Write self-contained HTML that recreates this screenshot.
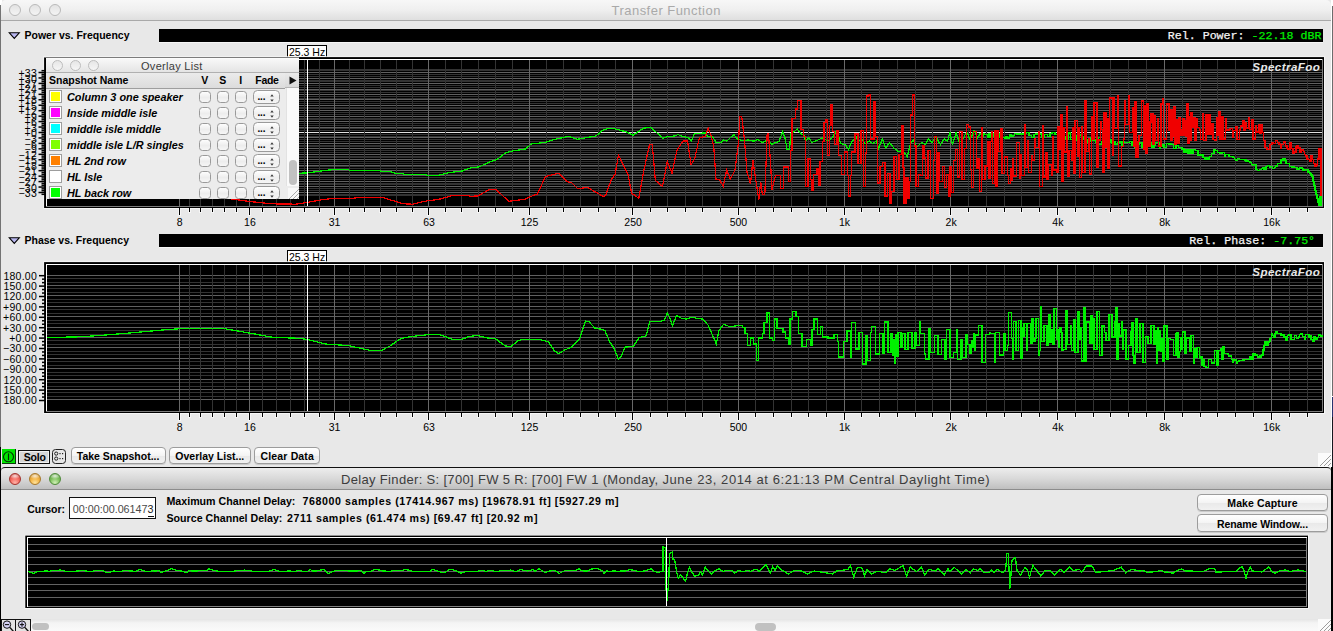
<!DOCTYPE html><html><head><meta charset="utf-8"><title>Transfer Function</title><style>
html,body{margin:0;padding:0}
body{width:1333px;height:631px;overflow:hidden;background:#e8e8e8;position:relative;font-family:"Liberation Sans",sans-serif;color:#000}
.a{position:absolute}
.b{font-weight:bold}
.t{position:absolute;white-space:nowrap;line-height:1}
svg{position:absolute;overflow:visible}
.btn{position:absolute;box-sizing:border-box;border:1px solid #9c9c9c;border-radius:4px;background:linear-gradient(#ffffff,#f4f4f4 50%,#e9e9e9 52%,#f1f1f1);box-shadow:0 1px 0 rgba(0,0,0,.12);font-weight:bold;font-size:10.5px;text-align:center;white-space:nowrap}
.cb{position:absolute;box-sizing:border-box;width:12px;height:12px;border:1px solid #9a9a9a;border-radius:3.5px;background:linear-gradient(#fdfdfd,#ededed 55%,#f6f6f6)}
.pp{position:absolute;box-sizing:border-box;width:27px;height:14px;border:1px solid #9a9a9a;border-radius:4.5px;background:linear-gradient(#ffffff,#efefef 55%,#f6f6f6)}
.sw{position:absolute;box-sizing:border-box;width:13px;height:13px;border:1px solid #9d9d9d;background:#fff;padding:1px}
.sw i{display:block;width:9px;height:9px;border:0;}
.rowt{position:absolute;white-space:nowrap;font-weight:bold;font-style:italic;font-size:10.85px;line-height:1;left:67px}
</style></head><body>
<div class="a" style="left:1331px;top:0;width:2px;height:631px;background:#fff"></div>
<div class="a" style="left:1331.5px;top:6px;width:2px;height:390px;background:#6c6c6c"></div>
<div class="a" style="left:1331.5px;top:397px;width:2px;height:20px;background:#26336e"></div>
<div class="a" style="left:1331.5px;top:417px;width:2px;height:50px;background:#15171f"></div>
<div class="a" style="left:1331px;top:467px;width:2px;height:164px;background:#000"></div>
<div class="a" style="left:0;top:0;width:2px;height:6px;background:#fff"></div>
<div class="a" style="left:0;top:5px;width:1px;height:442px;background:#737373"></div>
<div class="a" style="left:0;top:447px;width:1.3px;height:184px;background:#000"></div>
<div class="a" style="left:1px;top:0;width:1330px;height:20px;border-radius:5px 5px 0 0;background:linear-gradient(#f7f7f7,#efefef 50%,#dfdfdf);border-bottom:1px solid #a9a9a9"></div>
<div class="a" style="left:9px;top:4px;width:12px;height:12px;border-radius:50%;box-sizing:border-box;border:1px solid #b9b9b9;background:linear-gradient(#e3e3e3,#f4f4f4)"></div>
<div class="a" style="left:29px;top:4px;width:12px;height:12px;border-radius:50%;box-sizing:border-box;border:1px solid #b9b9b9;background:linear-gradient(#e3e3e3,#f4f4f4)"></div>
<div class="a" style="left:49px;top:4px;width:12px;height:12px;border-radius:50%;box-sizing:border-box;border:1px solid #b9b9b9;background:linear-gradient(#e3e3e3,#f4f4f4)"></div>
<div class="t" style="left:611.5px;top:3.5px;font-size:13px;letter-spacing:.47px;color:#a9a9a9">Transfer Function</div>
<svg style="left:8.3px;top:31.5px" width="13" height="8" viewBox="0 0 13 8"><path d="M1.3 0.8 L11.3 0.8 L6.3 6.4 Z" fill="#b9b7f0" stroke="#000" stroke-width="1.1" stroke-linejoin="miter"/></svg>
<div class="t b" style="left:24.5px;top:29.7px;font-size:10.5px">Power vs. Frequency</div>
<div class="a" style="left:159px;top:28.5px;width:1164px;height:13.5px;background:#000;border-bottom:1px solid #f6f6f6"></div>
<div class="t" style="right:11.6px;top:29.9px;font-family:'Liberation Mono',monospace;font-size:11.65px;color:#f4f4f4;-webkit-text-stroke:.25px #f4f4f4">Rel. Power: <span style="color:#00ee00;-webkit-text-stroke:.25px #00ee00">-22.18 dBR</span></div>
<svg style="left:8.3px;top:236.5px" width="13" height="8" viewBox="0 0 13 8"><path d="M1.3 0.8 L11.3 0.8 L6.3 6.4 Z" fill="#b9b7f0" stroke="#000" stroke-width="1.1" stroke-linejoin="miter"/></svg>
<div class="t b" style="left:24.5px;top:234.7px;font-size:10.5px">Phase vs. Frequency</div>
<div class="a" style="left:159px;top:233.5px;width:1164px;height:13.5px;background:#000;border-bottom:1px solid #f6f6f6"></div>
<div class="t" style="right:17.9px;top:234.9px;font-family:'Liberation Mono',monospace;font-size:11.65px;color:#f4f4f4;-webkit-text-stroke:.25px #f4f4f4">Rel. Phase: <span style="color:#00ee00;-webkit-text-stroke:.25px #00ee00">-7.75&deg;</span></div>
<div class="a" style="left:287px;top:45px;width:40px;height:12.5px;box-sizing:border-box;border:1px solid #000;background:#fff"></div>
<div class="t" style="left:289px;top:46.6px;font-size:10.5px">25.3 Hz</div>
<div class="a" style="left:287px;top:250px;width:40px;height:12.5px;box-sizing:border-box;border:1px solid #000;background:#fff"></div>
<div class="t" style="left:289px;top:251.6px;font-size:10.5px">25.3 Hz</div>
<svg style="left:0;top:0" width="1333" height="631" viewBox="0 0 1333 631" font-family="Liberation Sans, sans-serif"><g shape-rendering="crispEdges"><rect x="43.3" y="56.3" width="1281.8" height="152.8" fill="#f6f6f6" shape-rendering="auto"/><rect x="44.1" y="57.1" width="1279.9" height="150.9" fill="#000" shape-rendering="auto"/><rect x="47" y="69" width="1275" height="1" fill="#333333"/><rect x="47" y="70" width="1275" height="1" fill="#333333"/><rect x="47" y="72" width="1275" height="1" fill="#606060"/><rect x="47" y="74" width="1275" height="1" fill="#333333"/><rect x="47" y="76" width="1275" height="1" fill="#333333"/><rect x="47" y="78" width="1275" height="1" fill="#606060"/><rect x="47" y="80" width="1275" height="1" fill="#333333"/><rect x="47" y="81" width="1275" height="1" fill="#333333"/><rect x="47" y="83" width="1275" height="1" fill="#606060"/><rect x="47" y="85" width="1275" height="1" fill="#333333"/><rect x="47" y="87" width="1275" height="1" fill="#333333"/><rect x="47" y="89" width="1275" height="1" fill="#606060"/><rect x="47" y="90" width="1275" height="1" fill="#333333"/><rect x="47" y="92" width="1275" height="1" fill="#333333"/><rect x="47" y="94" width="1275" height="1" fill="#606060"/><rect x="47" y="96" width="1275" height="1" fill="#333333"/><rect x="47" y="98" width="1275" height="1" fill="#333333"/><rect x="47" y="99" width="1275" height="1" fill="#606060"/><rect x="47" y="101" width="1275" height="1" fill="#333333"/><rect x="47" y="103" width="1275" height="1" fill="#333333"/><rect x="47" y="105" width="1275" height="1" fill="#606060"/><rect x="47" y="107" width="1275" height="1" fill="#333333"/><rect x="47" y="108" width="1275" height="1" fill="#333333"/><rect x="47" y="110" width="1275" height="1" fill="#606060"/><rect x="47" y="112" width="1275" height="1" fill="#333333"/><rect x="47" y="114" width="1275" height="1" fill="#333333"/><rect x="47" y="116" width="1275" height="1" fill="#606060"/><rect x="47" y="118" width="1275" height="1" fill="#333333"/><rect x="47" y="119" width="1275" height="1" fill="#333333"/><rect x="47" y="121" width="1275" height="1" fill="#606060"/><rect x="47" y="123" width="1275" height="1" fill="#333333"/><rect x="47" y="125" width="1275" height="1" fill="#333333"/><rect x="47" y="127" width="1275" height="1" fill="#606060"/><rect x="47" y="128" width="1275" height="1" fill="#333333"/><rect x="47" y="130" width="1275" height="1" fill="#333333"/><rect x="47" y="132" width="1275" height="1" fill="#e0e0e0"/><rect x="47" y="134" width="1275" height="1" fill="#333333"/><rect x="47" y="136" width="1275" height="1" fill="#333333"/><rect x="47" y="137" width="1275" height="1" fill="#606060"/><rect x="47" y="139" width="1275" height="1" fill="#333333"/><rect x="47" y="141" width="1275" height="1" fill="#333333"/><rect x="47" y="143" width="1275" height="1" fill="#606060"/><rect x="47" y="145" width="1275" height="1" fill="#333333"/><rect x="47" y="146" width="1275" height="1" fill="#333333"/><rect x="47" y="148" width="1275" height="1" fill="#606060"/><rect x="47" y="150" width="1275" height="1" fill="#333333"/><rect x="47" y="152" width="1275" height="1" fill="#333333"/><rect x="47" y="154" width="1275" height="1" fill="#606060"/><rect x="47" y="156" width="1275" height="1" fill="#333333"/><rect x="47" y="157" width="1275" height="1" fill="#333333"/><rect x="47" y="159" width="1275" height="1" fill="#606060"/><rect x="47" y="161" width="1275" height="1" fill="#333333"/><rect x="47" y="163" width="1275" height="1" fill="#333333"/><rect x="47" y="165" width="1275" height="1" fill="#606060"/><rect x="47" y="166" width="1275" height="1" fill="#333333"/><rect x="47" y="168" width="1275" height="1" fill="#333333"/><rect x="47" y="170" width="1275" height="1" fill="#606060"/><rect x="47" y="172" width="1275" height="1" fill="#333333"/><rect x="47" y="174" width="1275" height="1" fill="#333333"/><rect x="47" y="175" width="1275" height="1" fill="#606060"/><rect x="47" y="177" width="1275" height="1" fill="#333333"/><rect x="47" y="179" width="1275" height="1" fill="#333333"/><rect x="47" y="181" width="1275" height="1" fill="#606060"/><rect x="47" y="183" width="1275" height="1" fill="#333333"/><rect x="47" y="184" width="1275" height="1" fill="#333333"/><rect x="47" y="186" width="1275" height="1" fill="#606060"/><rect x="47" y="188" width="1275" height="1" fill="#333333"/><rect x="47" y="190" width="1275" height="1" fill="#333333"/><rect x="47" y="192" width="1275" height="1" fill="#606060"/><rect x="47" y="194" width="1275" height="1" fill="#333333"/><rect x="47" y="195" width="1275" height="1" fill="#333333"/><rect x="179" y="60" width="1" height="146" fill="#686868"/><rect x="189" y="60" width="1" height="146" fill="#333333"/><rect x="200" y="60" width="1" height="146" fill="#333333"/><rect x="212" y="60" width="1" height="146" fill="#333333"/><rect x="224" y="60" width="1" height="146" fill="#333333"/><rect x="236" y="60" width="1" height="146" fill="#333333"/><rect x="249" y="60" width="1" height="146" fill="#686868"/><rect x="262" y="60" width="1" height="146" fill="#333333"/><rect x="276" y="60" width="1" height="146" fill="#333333"/><rect x="290" y="60" width="1" height="146" fill="#333333"/><rect x="304" y="60" width="1" height="146" fill="#333333"/><rect x="319" y="60" width="1" height="146" fill="#333333"/><rect x="334" y="60" width="1" height="146" fill="#686868"/><rect x="349" y="60" width="1" height="146" fill="#333333"/><rect x="364" y="60" width="1" height="146" fill="#333333"/><rect x="380" y="60" width="1" height="146" fill="#333333"/><rect x="396" y="60" width="1" height="146" fill="#333333"/><rect x="412" y="60" width="1" height="146" fill="#333333"/><rect x="428" y="60" width="1" height="146" fill="#686868"/><rect x="445" y="60" width="1" height="146" fill="#333333"/><rect x="461" y="60" width="1" height="146" fill="#333333"/><rect x="478" y="60" width="1" height="146" fill="#333333"/><rect x="495" y="60" width="1" height="146" fill="#333333"/><rect x="512" y="60" width="1" height="146" fill="#333333"/><rect x="529" y="60" width="1" height="146" fill="#686868"/><rect x="546" y="60" width="1" height="146" fill="#333333"/><rect x="563" y="60" width="1" height="146" fill="#333333"/><rect x="580" y="60" width="1" height="146" fill="#333333"/><rect x="598" y="60" width="1" height="146" fill="#333333"/><rect x="615" y="60" width="1" height="146" fill="#333333"/><rect x="632" y="60" width="1" height="146" fill="#686868"/><rect x="650" y="60" width="1" height="146" fill="#333333"/><rect x="667" y="60" width="1" height="146" fill="#333333"/><rect x="685" y="60" width="1" height="146" fill="#333333"/><rect x="702" y="60" width="1" height="146" fill="#333333"/><rect x="720" y="60" width="1" height="146" fill="#333333"/><rect x="738" y="60" width="1" height="146" fill="#686868"/><rect x="755" y="60" width="1" height="146" fill="#333333"/><rect x="773" y="60" width="1" height="146" fill="#333333"/><rect x="791" y="60" width="1" height="146" fill="#333333"/><rect x="808" y="60" width="1" height="146" fill="#333333"/><rect x="826" y="60" width="1" height="146" fill="#333333"/><rect x="844" y="60" width="1" height="146" fill="#686868"/><rect x="861" y="60" width="1" height="146" fill="#333333"/><rect x="879" y="60" width="1" height="146" fill="#333333"/><rect x="897" y="60" width="1" height="146" fill="#333333"/><rect x="915" y="60" width="1" height="146" fill="#333333"/><rect x="932" y="60" width="1" height="146" fill="#333333"/><rect x="950" y="60" width="1" height="146" fill="#686868"/><rect x="968" y="60" width="1" height="146" fill="#333333"/><rect x="986" y="60" width="1" height="146" fill="#333333"/><rect x="1004" y="60" width="1" height="146" fill="#333333"/><rect x="1021" y="60" width="1" height="146" fill="#333333"/><rect x="1039" y="60" width="1" height="146" fill="#333333"/><rect x="1057" y="60" width="1" height="146" fill="#686868"/><rect x="1075" y="60" width="1" height="146" fill="#333333"/><rect x="1093" y="60" width="1" height="146" fill="#333333"/><rect x="1110" y="60" width="1" height="146" fill="#333333"/><rect x="1128" y="60" width="1" height="146" fill="#333333"/><rect x="1146" y="60" width="1" height="146" fill="#333333"/><rect x="1164" y="60" width="1" height="146" fill="#686868"/><rect x="1182" y="60" width="1" height="146" fill="#333333"/><rect x="1200" y="60" width="1" height="146" fill="#333333"/><rect x="1217" y="60" width="1" height="146" fill="#333333"/><rect x="1235" y="60" width="1" height="146" fill="#333333"/><rect x="1253" y="60" width="1" height="146" fill="#333333"/><rect x="1271" y="60" width="1" height="146" fill="#686868"/><rect x="1289" y="60" width="1" height="146" fill="#333333"/><rect x="1307" y="60" width="1" height="146" fill="#333333"/><rect x="46" y="59" width="1277" height="1" fill="#ffffff"/><rect x="46" y="59" width="1" height="148" fill="#ffffff"/><rect x="46" y="206" width="1277" height="1" fill="#7c7c7c"/><rect x="1322" y="59" width="1" height="148" fill="#7c7c7c"/><rect x="178" y="209" width="3" height="7" fill="#f5f5f5"/><rect x="179" y="208" width="1" height="7" fill="#000"/><rect x="188" y="209" width="3" height="4" fill="#f5f5f5"/><rect x="189" y="208" width="1" height="4" fill="#000"/><rect x="199" y="209" width="3" height="4" fill="#f5f5f5"/><rect x="200" y="208" width="1" height="4" fill="#000"/><rect x="211" y="209" width="3" height="4" fill="#f5f5f5"/><rect x="212" y="208" width="1" height="4" fill="#000"/><rect x="223" y="209" width="3" height="4" fill="#f5f5f5"/><rect x="224" y="208" width="1" height="4" fill="#000"/><rect x="235" y="209" width="3" height="4" fill="#f5f5f5"/><rect x="236" y="208" width="1" height="4" fill="#000"/><rect x="248" y="209" width="3" height="7" fill="#f5f5f5"/><rect x="249" y="208" width="1" height="7" fill="#000"/><rect x="261" y="209" width="3" height="4" fill="#f5f5f5"/><rect x="262" y="208" width="1" height="4" fill="#000"/><rect x="275" y="209" width="3" height="4" fill="#f5f5f5"/><rect x="276" y="208" width="1" height="4" fill="#000"/><rect x="289" y="209" width="3" height="4" fill="#f5f5f5"/><rect x="290" y="208" width="1" height="4" fill="#000"/><rect x="303" y="209" width="3" height="4" fill="#f5f5f5"/><rect x="304" y="208" width="1" height="4" fill="#000"/><rect x="318" y="209" width="3" height="4" fill="#f5f5f5"/><rect x="319" y="208" width="1" height="4" fill="#000"/><rect x="333" y="209" width="3" height="7" fill="#f5f5f5"/><rect x="334" y="208" width="1" height="7" fill="#000"/><rect x="348" y="209" width="3" height="4" fill="#f5f5f5"/><rect x="349" y="208" width="1" height="4" fill="#000"/><rect x="363" y="209" width="3" height="4" fill="#f5f5f5"/><rect x="364" y="208" width="1" height="4" fill="#000"/><rect x="379" y="209" width="3" height="4" fill="#f5f5f5"/><rect x="380" y="208" width="1" height="4" fill="#000"/><rect x="395" y="209" width="3" height="4" fill="#f5f5f5"/><rect x="396" y="208" width="1" height="4" fill="#000"/><rect x="411" y="209" width="3" height="4" fill="#f5f5f5"/><rect x="412" y="208" width="1" height="4" fill="#000"/><rect x="427" y="209" width="3" height="7" fill="#f5f5f5"/><rect x="428" y="208" width="1" height="7" fill="#000"/><rect x="444" y="209" width="3" height="4" fill="#f5f5f5"/><rect x="445" y="208" width="1" height="4" fill="#000"/><rect x="460" y="209" width="3" height="4" fill="#f5f5f5"/><rect x="461" y="208" width="1" height="4" fill="#000"/><rect x="477" y="209" width="3" height="4" fill="#f5f5f5"/><rect x="478" y="208" width="1" height="4" fill="#000"/><rect x="494" y="209" width="3" height="4" fill="#f5f5f5"/><rect x="495" y="208" width="1" height="4" fill="#000"/><rect x="511" y="209" width="3" height="4" fill="#f5f5f5"/><rect x="512" y="208" width="1" height="4" fill="#000"/><rect x="528" y="209" width="3" height="7" fill="#f5f5f5"/><rect x="529" y="208" width="1" height="7" fill="#000"/><rect x="545" y="209" width="3" height="4" fill="#f5f5f5"/><rect x="546" y="208" width="1" height="4" fill="#000"/><rect x="562" y="209" width="3" height="4" fill="#f5f5f5"/><rect x="563" y="208" width="1" height="4" fill="#000"/><rect x="579" y="209" width="3" height="4" fill="#f5f5f5"/><rect x="580" y="208" width="1" height="4" fill="#000"/><rect x="597" y="209" width="3" height="4" fill="#f5f5f5"/><rect x="598" y="208" width="1" height="4" fill="#000"/><rect x="614" y="209" width="3" height="4" fill="#f5f5f5"/><rect x="615" y="208" width="1" height="4" fill="#000"/><rect x="631" y="209" width="3" height="7" fill="#f5f5f5"/><rect x="632" y="208" width="1" height="7" fill="#000"/><rect x="649" y="209" width="3" height="4" fill="#f5f5f5"/><rect x="650" y="208" width="1" height="4" fill="#000"/><rect x="666" y="209" width="3" height="4" fill="#f5f5f5"/><rect x="667" y="208" width="1" height="4" fill="#000"/><rect x="684" y="209" width="3" height="4" fill="#f5f5f5"/><rect x="685" y="208" width="1" height="4" fill="#000"/><rect x="701" y="209" width="3" height="4" fill="#f5f5f5"/><rect x="702" y="208" width="1" height="4" fill="#000"/><rect x="719" y="209" width="3" height="4" fill="#f5f5f5"/><rect x="720" y="208" width="1" height="4" fill="#000"/><rect x="737" y="209" width="3" height="7" fill="#f5f5f5"/><rect x="738" y="208" width="1" height="7" fill="#000"/><rect x="754" y="209" width="3" height="4" fill="#f5f5f5"/><rect x="755" y="208" width="1" height="4" fill="#000"/><rect x="772" y="209" width="3" height="4" fill="#f5f5f5"/><rect x="773" y="208" width="1" height="4" fill="#000"/><rect x="790" y="209" width="3" height="4" fill="#f5f5f5"/><rect x="791" y="208" width="1" height="4" fill="#000"/><rect x="807" y="209" width="3" height="4" fill="#f5f5f5"/><rect x="808" y="208" width="1" height="4" fill="#000"/><rect x="825" y="209" width="3" height="4" fill="#f5f5f5"/><rect x="826" y="208" width="1" height="4" fill="#000"/><rect x="843" y="209" width="3" height="7" fill="#f5f5f5"/><rect x="844" y="208" width="1" height="7" fill="#000"/><rect x="860" y="209" width="3" height="4" fill="#f5f5f5"/><rect x="861" y="208" width="1" height="4" fill="#000"/><rect x="878" y="209" width="3" height="4" fill="#f5f5f5"/><rect x="879" y="208" width="1" height="4" fill="#000"/><rect x="896" y="209" width="3" height="4" fill="#f5f5f5"/><rect x="897" y="208" width="1" height="4" fill="#000"/><rect x="914" y="209" width="3" height="4" fill="#f5f5f5"/><rect x="915" y="208" width="1" height="4" fill="#000"/><rect x="931" y="209" width="3" height="4" fill="#f5f5f5"/><rect x="932" y="208" width="1" height="4" fill="#000"/><rect x="949" y="209" width="3" height="7" fill="#f5f5f5"/><rect x="950" y="208" width="1" height="7" fill="#000"/><rect x="967" y="209" width="3" height="4" fill="#f5f5f5"/><rect x="968" y="208" width="1" height="4" fill="#000"/><rect x="985" y="209" width="3" height="4" fill="#f5f5f5"/><rect x="986" y="208" width="1" height="4" fill="#000"/><rect x="1003" y="209" width="3" height="4" fill="#f5f5f5"/><rect x="1004" y="208" width="1" height="4" fill="#000"/><rect x="1020" y="209" width="3" height="4" fill="#f5f5f5"/><rect x="1021" y="208" width="1" height="4" fill="#000"/><rect x="1038" y="209" width="3" height="4" fill="#f5f5f5"/><rect x="1039" y="208" width="1" height="4" fill="#000"/><rect x="1056" y="209" width="3" height="7" fill="#f5f5f5"/><rect x="1057" y="208" width="1" height="7" fill="#000"/><rect x="1074" y="209" width="3" height="4" fill="#f5f5f5"/><rect x="1075" y="208" width="1" height="4" fill="#000"/><rect x="1092" y="209" width="3" height="4" fill="#f5f5f5"/><rect x="1093" y="208" width="1" height="4" fill="#000"/><rect x="1109" y="209" width="3" height="4" fill="#f5f5f5"/><rect x="1110" y="208" width="1" height="4" fill="#000"/><rect x="1127" y="209" width="3" height="4" fill="#f5f5f5"/><rect x="1128" y="208" width="1" height="4" fill="#000"/><rect x="1145" y="209" width="3" height="4" fill="#f5f5f5"/><rect x="1146" y="208" width="1" height="4" fill="#000"/><rect x="1163" y="209" width="3" height="7" fill="#f5f5f5"/><rect x="1164" y="208" width="1" height="7" fill="#000"/><rect x="1181" y="209" width="3" height="4" fill="#f5f5f5"/><rect x="1182" y="208" width="1" height="4" fill="#000"/><rect x="1199" y="209" width="3" height="4" fill="#f5f5f5"/><rect x="1200" y="208" width="1" height="4" fill="#000"/><rect x="1216" y="209" width="3" height="4" fill="#f5f5f5"/><rect x="1217" y="208" width="1" height="4" fill="#000"/><rect x="1234" y="209" width="3" height="4" fill="#f5f5f5"/><rect x="1235" y="208" width="1" height="4" fill="#000"/><rect x="1252" y="209" width="3" height="4" fill="#f5f5f5"/><rect x="1253" y="208" width="1" height="4" fill="#000"/><rect x="1270" y="209" width="3" height="7" fill="#f5f5f5"/><rect x="1271" y="208" width="1" height="7" fill="#000"/><rect x="1288" y="209" width="3" height="4" fill="#f5f5f5"/><rect x="1289" y="208" width="1" height="4" fill="#000"/><rect x="1306" y="209" width="3" height="4" fill="#f5f5f5"/><rect x="1307" y="208" width="1" height="4" fill="#000"/><text x="179.7" y="225.5" text-anchor="middle" font-size="10.5" fill="#000">8</text><text x="249.9" y="225.5" text-anchor="middle" font-size="10.5" fill="#000">16</text><text x="334.6" y="225.5" text-anchor="middle" font-size="10.5" fill="#000">31</text><text x="429.1" y="225.5" text-anchor="middle" font-size="10.5" fill="#000">63</text><text x="529.5" y="225.5" text-anchor="middle" font-size="10.5" fill="#000">125</text><text x="633.1" y="225.5" text-anchor="middle" font-size="10.5" fill="#000">250</text><text x="738.4" y="225.5" text-anchor="middle" font-size="10.5" fill="#000">500</text><text x="844.5" y="225.5" text-anchor="middle" font-size="10.5" fill="#000">1k</text><text x="951.1" y="225.5" text-anchor="middle" font-size="10.5" fill="#000">2k</text><text x="1057.9" y="225.5" text-anchor="middle" font-size="10.5" fill="#000">4k</text><text x="1164.8" y="225.5" text-anchor="middle" font-size="10.5" fill="#000">8k</text><text x="1271.7" y="225.5" text-anchor="middle" font-size="10.5" fill="#000">16k</text><rect x="41.5" y="193.57" width="3.5" height="1.5" fill="#000" shape-rendering="auto"/><rect x="38.5" y="191.75" width="6.5" height="1.5" fill="#000" shape-rendering="auto"/><rect x="41.5" y="189.93" width="3.5" height="1.5" fill="#000" shape-rendering="auto"/><rect x="41.5" y="188.11" width="3.5" height="1.5" fill="#000" shape-rendering="auto"/><rect x="38.5" y="186.30" width="6.5" height="1.5" fill="#000" shape-rendering="auto"/><rect x="41.5" y="184.48" width="3.5" height="1.5" fill="#000" shape-rendering="auto"/><rect x="41.5" y="182.66" width="3.5" height="1.5" fill="#000" shape-rendering="auto"/><rect x="38.5" y="180.84" width="6.5" height="1.5" fill="#000" shape-rendering="auto"/><rect x="41.5" y="179.02" width="3.5" height="1.5" fill="#000" shape-rendering="auto"/><rect x="41.5" y="177.20" width="3.5" height="1.5" fill="#000" shape-rendering="auto"/><rect x="38.5" y="175.39" width="6.5" height="1.5" fill="#000" shape-rendering="auto"/><rect x="41.5" y="173.57" width="3.5" height="1.5" fill="#000" shape-rendering="auto"/><rect x="41.5" y="171.75" width="3.5" height="1.5" fill="#000" shape-rendering="auto"/><rect x="38.5" y="169.93" width="6.5" height="1.5" fill="#000" shape-rendering="auto"/><rect x="41.5" y="168.11" width="3.5" height="1.5" fill="#000" shape-rendering="auto"/><rect x="41.5" y="166.30" width="3.5" height="1.5" fill="#000" shape-rendering="auto"/><rect x="38.5" y="164.48" width="6.5" height="1.5" fill="#000" shape-rendering="auto"/><rect x="41.5" y="162.66" width="3.5" height="1.5" fill="#000" shape-rendering="auto"/><rect x="41.5" y="160.84" width="3.5" height="1.5" fill="#000" shape-rendering="auto"/><rect x="38.5" y="159.02" width="6.5" height="1.5" fill="#000" shape-rendering="auto"/><rect x="41.5" y="157.20" width="3.5" height="1.5" fill="#000" shape-rendering="auto"/><rect x="41.5" y="155.39" width="3.5" height="1.5" fill="#000" shape-rendering="auto"/><rect x="38.5" y="153.57" width="6.5" height="1.5" fill="#000" shape-rendering="auto"/><rect x="41.5" y="151.75" width="3.5" height="1.5" fill="#000" shape-rendering="auto"/><rect x="41.5" y="149.93" width="3.5" height="1.5" fill="#000" shape-rendering="auto"/><rect x="38.5" y="148.11" width="6.5" height="1.5" fill="#000" shape-rendering="auto"/><rect x="41.5" y="146.30" width="3.5" height="1.5" fill="#000" shape-rendering="auto"/><rect x="41.5" y="144.48" width="3.5" height="1.5" fill="#000" shape-rendering="auto"/><rect x="38.5" y="142.66" width="6.5" height="1.5" fill="#000" shape-rendering="auto"/><rect x="41.5" y="140.84" width="3.5" height="1.5" fill="#000" shape-rendering="auto"/><rect x="41.5" y="139.02" width="3.5" height="1.5" fill="#000" shape-rendering="auto"/><rect x="38.5" y="137.20" width="6.5" height="1.5" fill="#000" shape-rendering="auto"/><rect x="41.5" y="135.39" width="3.5" height="1.5" fill="#000" shape-rendering="auto"/><rect x="41.5" y="133.57" width="3.5" height="1.5" fill="#000" shape-rendering="auto"/><rect x="38.5" y="131.75" width="6.5" height="1.5" fill="#000" shape-rendering="auto"/><rect x="41.5" y="129.93" width="3.5" height="1.5" fill="#000" shape-rendering="auto"/><rect x="41.5" y="128.11" width="3.5" height="1.5" fill="#000" shape-rendering="auto"/><rect x="38.5" y="126.30" width="6.5" height="1.5" fill="#000" shape-rendering="auto"/><rect x="41.5" y="124.48" width="3.5" height="1.5" fill="#000" shape-rendering="auto"/><rect x="41.5" y="122.66" width="3.5" height="1.5" fill="#000" shape-rendering="auto"/><rect x="38.5" y="120.84" width="6.5" height="1.5" fill="#000" shape-rendering="auto"/><rect x="41.5" y="119.02" width="3.5" height="1.5" fill="#000" shape-rendering="auto"/><rect x="41.5" y="117.20" width="3.5" height="1.5" fill="#000" shape-rendering="auto"/><rect x="38.5" y="115.39" width="6.5" height="1.5" fill="#000" shape-rendering="auto"/><rect x="41.5" y="113.57" width="3.5" height="1.5" fill="#000" shape-rendering="auto"/><rect x="41.5" y="111.75" width="3.5" height="1.5" fill="#000" shape-rendering="auto"/><rect x="38.5" y="109.93" width="6.5" height="1.5" fill="#000" shape-rendering="auto"/><rect x="41.5" y="108.11" width="3.5" height="1.5" fill="#000" shape-rendering="auto"/><rect x="41.5" y="106.30" width="3.5" height="1.5" fill="#000" shape-rendering="auto"/><rect x="38.5" y="104.48" width="6.5" height="1.5" fill="#000" shape-rendering="auto"/><rect x="41.5" y="102.66" width="3.5" height="1.5" fill="#000" shape-rendering="auto"/><rect x="41.5" y="100.84" width="3.5" height="1.5" fill="#000" shape-rendering="auto"/><rect x="38.5" y="99.02" width="6.5" height="1.5" fill="#000" shape-rendering="auto"/><rect x="41.5" y="97.20" width="3.5" height="1.5" fill="#000" shape-rendering="auto"/><rect x="41.5" y="95.39" width="3.5" height="1.5" fill="#000" shape-rendering="auto"/><rect x="38.5" y="93.57" width="6.5" height="1.5" fill="#000" shape-rendering="auto"/><rect x="41.5" y="91.75" width="3.5" height="1.5" fill="#000" shape-rendering="auto"/><rect x="41.5" y="89.93" width="3.5" height="1.5" fill="#000" shape-rendering="auto"/><rect x="38.5" y="88.11" width="6.5" height="1.5" fill="#000" shape-rendering="auto"/><rect x="41.5" y="86.30" width="3.5" height="1.5" fill="#000" shape-rendering="auto"/><rect x="41.5" y="84.48" width="3.5" height="1.5" fill="#000" shape-rendering="auto"/><rect x="38.5" y="82.66" width="6.5" height="1.5" fill="#000" shape-rendering="auto"/><rect x="41.5" y="80.84" width="3.5" height="1.5" fill="#000" shape-rendering="auto"/><rect x="41.5" y="79.02" width="3.5" height="1.5" fill="#000" shape-rendering="auto"/><rect x="38.5" y="77.20" width="6.5" height="1.5" fill="#000" shape-rendering="auto"/><rect x="41.5" y="75.39" width="3.5" height="1.5" fill="#000" shape-rendering="auto"/><rect x="41.5" y="73.57" width="3.5" height="1.5" fill="#000" shape-rendering="auto"/><rect x="38.5" y="71.75" width="6.5" height="1.5" fill="#000" shape-rendering="auto"/><rect x="41.5" y="69.93" width="3.5" height="1.5" fill="#000" shape-rendering="auto"/></g><text x="37" y="77.0" text-anchor="end" font-size="10.5" letter-spacing=".25" fill="#000">+33</text><text x="37" y="82.5" text-anchor="end" font-size="10.5" letter-spacing=".25" fill="#000">+30</text><text x="37" y="87.9" text-anchor="end" font-size="10.5" letter-spacing=".25" fill="#000">+27</text><text x="37" y="93.4" text-anchor="end" font-size="10.5" letter-spacing=".25" fill="#000">+24</text><text x="37" y="98.8" text-anchor="end" font-size="10.5" letter-spacing=".25" fill="#000">+21</text><text x="37" y="104.3" text-anchor="end" font-size="10.5" letter-spacing=".25" fill="#000">+18</text><text x="37" y="109.7" text-anchor="end" font-size="10.5" letter-spacing=".25" fill="#000">+15</text><text x="37" y="115.2" text-anchor="end" font-size="10.5" letter-spacing=".25" fill="#000">+12</text><text x="37" y="120.6" text-anchor="end" font-size="10.5" letter-spacing=".25" fill="#000">+9</text><text x="37" y="126.1" text-anchor="end" font-size="10.5" letter-spacing=".25" fill="#000">+6</text><text x="37" y="131.5" text-anchor="end" font-size="10.5" letter-spacing=".25" fill="#000">+3</text><text x="37" y="137.0" text-anchor="end" font-size="10.5" letter-spacing=".25" fill="#000">+0</text><text x="37" y="142.5" text-anchor="end" font-size="10.5" letter-spacing=".25" fill="#000">−3</text><text x="37" y="147.9" text-anchor="end" font-size="10.5" letter-spacing=".25" fill="#000">−6</text><text x="37" y="153.4" text-anchor="end" font-size="10.5" letter-spacing=".25" fill="#000">−9</text><text x="37" y="158.8" text-anchor="end" font-size="10.5" letter-spacing=".25" fill="#000">−12</text><text x="37" y="164.3" text-anchor="end" font-size="10.5" letter-spacing=".25" fill="#000">−15</text><text x="37" y="169.7" text-anchor="end" font-size="10.5" letter-spacing=".25" fill="#000">−18</text><text x="37" y="175.2" text-anchor="end" font-size="10.5" letter-spacing=".25" fill="#000">−21</text><text x="37" y="180.6" text-anchor="end" font-size="10.5" letter-spacing=".25" fill="#000">−24</text><text x="37" y="186.1" text-anchor="end" font-size="10.5" letter-spacing=".25" fill="#000">−27</text><text x="37" y="191.5" text-anchor="end" font-size="10.5" letter-spacing=".25" fill="#000">−30</text><text x="37" y="197.0" text-anchor="end" font-size="10.5" letter-spacing=".25" fill="#000">−33</text><g fill="none" stroke-width="1.25" stroke-linejoin="miter" shape-rendering="crispEdges"><polyline points="47.0,176.5 120.0,176.5 180.0,175.0 232.0,173.8 262.0,176.0 285.0,175.0 299.6,173.3 307.9,172.8 322.1,170.9 336.4,169.2 347.1,169.2 349.5,170.2 379.2,170.4 381.6,171.4 390.0,171.6 395.8,173.3 403.0,173.8 405.3,174.5 425.5,174.5 427.9,175.4 438.6,175.2 448.1,172.8 462.4,170.9 471.9,167.6 479.0,166.9 490.9,161.4 496.9,159.7 505.2,153.1 509.9,151.4 525.4,149.0 531.3,144.0 545.6,142.4 555.1,139.3 568.2,136.4 577.7,139.3 590.0,137.0 596.0,136.0 601.9,130.5 609.0,128.4 613.8,128.6 625.7,131.7 632.8,135.3 643.5,128.2 650.6,127.4 657.8,133.6 662.5,138.4 668.5,136.5 674.4,136.0 678.0,134.6 682.7,136.5 688.7,137.7 691.1,141.2 694.6,133.6 705.3,132.9 707.7,136.5 712.5,136.5 716.0,142.4 720.8,142.4 723.2,140.0 726.7,141.2 730.3,137.7 733.9,134.6 737.4,138.9 742.2,140.8 748.1,140.0 754.1,141.2 757.7,139.6 762.4,142.4 767.2,140.0 771.9,144.1 779.1,141.2 782.6,131.7 785.0,137.7 787.1,149.6 789.5,149.6 790.7,134.1 794.3,131.7 797.1,128.9 800.2,132.9 803.8,135.3 805.7,141.2 808.5,137.7 812.1,142.4 818.0,140.0 822.8,137.7 827.6,141.2 832.3,137.7 835.9,131.7 838.3,135.3 840.6,143.6 845.4,144.8 848.5,149.6 851.3,142.4 856.1,136.5 858.5,141.2 862.0,138.9 865.1,143.6 869.2,140.8 872.7,143.6 876.3,141.2 878.7,148.4 882.3,138.9 885.8,148.4 889.4,142.4 894.1,148.4 898.9,151.9 902.5,149.6 907.2,156.7 910.8,142.4 913.2,140.0 916.7,147.2 921.5,142.4 925.1,144.8 928.6,138.9 932.2,142.4 935.8,136.5 940.5,144.8 944.1,138.9 947.7,141.2 950.0,131.7 952.4,144.8 956.0,132.9 959.5,142.4 963.1,138.9 966.7,131.7 970.2,140.0 973.8,130.5 977.4,137.7 979.8,134.1 979.8,134.1 981.5,134.1 981.5,136.8 983.5,136.8 983.5,134.0 984.5,134.0 984.5,134.8 985.5,134.8 985.5,134.6 988.0,134.6 988.0,137.0 989.0,137.0 989.0,134.1 990.0,134.1 990.0,137.5 992.0,137.5 992.0,136.2 993.5,136.2 993.5,133.9 995.5,133.9 995.5,135.0 997.5,135.0 997.5,133.5 999.5,133.5 999.5,137.1 1002.0,137.1 1002.0,137.7 1004.5,137.7 1004.5,137.9 1006.0,137.9 1006.0,136.7 1007.0,136.7 1007.0,138.0 1009.5,138.0 1009.5,135.0 1011.0,135.0 1011.0,136.2 1013.0,136.2 1013.0,135.2 1014.5,135.2 1014.5,133.3 1017.0,133.3 1017.0,134.3 1019.0,134.3 1019.0,133.7 1021.0,133.7 1021.0,134.7 1022.5,134.7 1022.5,134.0 1025.0,134.0 1025.0,132.9 1026.5,132.9 1026.5,132.6 1029.0,132.6 1029.0,135.5 1031.5,135.5 1031.5,137.7 1034.0,137.7 1034.0,134.7 1035.5,134.7 1035.5,133.5 1037.0,133.5 1037.0,134.2 1038.0,134.2 1038.0,134.0 1040.0,134.0 1040.0,133.6 1041.5,133.6 1041.5,137.6 1044.0,137.6 1044.0,134.4 1045.5,134.4 1045.5,134.3 1047.5,134.3 1047.5,136.7 1050.0,136.7 1050.0,133.6 1052.0,133.6 1052.0,132.7 1053.5,132.7 1053.5,132.4 1055.0,132.4 1055.0,134.3 1057.5,134.3 1057.5,134.6 1059.5,134.6 1059.5,137.2 1060.5,137.2 1060.5,132.7 1063.0,132.7 1063.0,136.9 1065.5,136.9 1065.5,139.0 1068.0,139.0 1068.0,133.1 1070.5,133.1 1070.5,139.6 1073.0,139.6 1073.0,140.3 1074.5,140.3 1074.5,139.3 1076.0,139.3 1076.0,135.3 1077.0,135.3 1077.0,140.8 1079.5,140.8 1079.5,135.4 1080.5,135.4 1080.5,135.0 1082.0,135.0 1082.0,136.8 1083.0,136.8 1083.0,139.8 1085.0,139.8 1085.0,142.4 1087.0,142.4 1087.0,139.7 1089.5,139.7 1089.5,141.3 1090.5,141.3 1090.5,137.3 1092.5,137.3 1092.5,140.5 1094.0,140.5 1094.0,139.7 1095.5,139.7 1095.5,142.7 1096.5,142.7 1096.5,137.4 1098.5,137.4 1098.5,144.4 1100.5,144.4 1100.5,144.4 1102.0,144.4 1102.0,141.3 1103.5,141.3 1103.5,142.0 1104.5,142.0 1104.5,144.9 1106.5,144.9 1106.5,139.1 1108.0,139.1 1108.0,142.2 1110.5,142.2 1110.5,139.8 1112.0,139.8 1112.0,143.8 1114.0,143.8 1114.0,141.2 1115.0,141.2 1115.0,144.4 1117.5,144.4 1117.5,142.5 1120.0,142.5 1120.0,141.8 1122.0,141.8 1122.0,145.3 1123.0,145.3 1123.0,142.0 1124.5,142.0 1124.5,142.7 1126.0,142.7 1126.0,142.3 1127.5,142.3 1127.5,142.6 1129.5,142.6 1129.5,141.7 1132.0,141.7 1132.0,144.9 1133.5,144.9 1133.5,144.2 1134.5,144.2 1134.5,147.2 1136.0,147.2 1136.0,147.1 1137.0,147.1 1137.0,142.7 1138.5,142.7 1138.5,144.0 1139.5,144.0 1139.5,142.6 1142.0,142.6 1142.0,147.2 1144.0,147.2 1144.0,146.2 1145.0,146.2 1145.0,147.5 1147.0,147.5 1147.0,143.0 1149.5,143.0 1149.5,142.2 1152.0,142.2 1152.0,147.3 1154.0,147.3 1154.0,144.9 1155.0,144.9 1155.0,142.3 1157.0,142.3 1157.0,142.8 1159.5,142.8 1159.5,148.3 1160.5,148.3 1160.5,145.9 1162.0,145.9 1162.0,144.9 1164.0,144.9 1164.0,147.7 1166.5,147.7 1166.5,143.4 1169.0,143.4 1169.0,144.1 1171.5,144.1 1171.5,144.7 1173.5,144.7 1173.5,148.6 1176.0,148.6 1176.0,145.6 1178.5,145.6 1178.5,147.8 1181.0,147.8 1181.0,147.5 1182.0,147.5 1182.0,149.8 1183.0,149.8 1183.0,148.9 1184.0,148.9 1184.0,152.3 1186.0,152.3 1186.0,149.9 1188.0,149.9 1188.0,153.2 1189.0,153.2 1189.0,149.9 1191.0,149.9 1191.0,153.6 1193.0,153.6 1193.0,149.3 1194.0,149.3 1194.0,149.6 1195.5,149.6 1195.5,150.3 1198.0,150.3 1198.0,154.9 1200.5,154.9 1200.5,154.9 1203.0,154.9 1203.0,157.4 1204.5,157.4 1204.5,159.3 1206.0,159.3 1206.0,157.6 1208.0,157.6 1208.0,159.5 1209.5,159.5 1209.5,156.2 1211.5,156.2 1211.5,153.6 1214.0,153.6 1214.0,149.5 1215.0,149.5 1215.0,150.6 1217.5,150.6 1217.5,152.8 1219.0,152.8 1219.0,152.2 1220.0,152.2 1220.0,153.0 1222.0,153.0 1222.0,152.7 1224.5,152.7 1224.5,156.8 1225.5,156.8 1225.5,154.7 1226.5,154.7 1226.5,154.8 1229.0,154.8 1229.0,156.8 1231.5,156.8 1231.5,156.3 1233.0,156.3 1233.0,157.7 1234.5,157.7 1234.5,159.5 1235.5,159.5 1235.5,160.0 1237.5,160.0 1237.5,158.7 1239.5,158.7 1239.5,159.6 1241.5,159.6 1241.5,159.5 1243.0,159.5 1243.0,159.8 1244.5,159.8 1244.5,160.0 1246.0,160.0 1246.0,161.0 1248.5,161.0 1248.5,161.3 1250.0,161.3 1250.0,162.7 1251.5,162.7 1251.5,164.7 1252.5,164.7 1252.5,165.6 1253.5,165.6 1253.5,164.5 1256.0,164.5 1256.0,169.5 1257.5,169.5 1257.5,170.7 1259.5,170.7 1259.5,169.3 1261.5,169.3 1261.5,168.5 1262.5,168.5 1262.5,167.7 1264.0,167.7 1264.0,169.0 1266.0,169.0 1266.0,166.4 1267.5,166.4 1267.5,165.2 1269.5,165.2 1269.5,167.2 1270.5,167.2 1270.5,166.3 1272.5,166.3 1272.5,168.6 1274.5,168.6 1274.5,167.6 1275.5,167.6 1275.5,166.1 1277.5,166.1 1277.5,163.2 1279.0,163.2 1279.0,163.5 1281.0,163.5 1281.0,160.0 1283.0,160.0 1283.0,159.1 1285.0,159.1 1285.0,160.6 1286.0,160.6 1286.0,163.4 1288.5,163.4 1288.5,163.8 1289.5,163.8 1289.5,166.5 1291.0,166.5 1291.0,166.8 1292.0,166.8 1292.0,167.0 1294.5,167.0 1294.5,167.7 1297.0,167.7 1297.0,169.1 1299.0,169.1 1299.0,168.2 1300.0,168.2 1300.0,168.1 1302.0,168.1 1302.0,168.7 1303.0,168.7 1303.0,169.9 1305.0,169.9 1305.0,169.8 1306.0,169.8 1306.0,169.4 1307.0,169.4 1307.0,169.6 1308.0,169.6 1308.0,172.0 1309.0,172.0 1309.0,172.5 1310.0,172.5 1310.0,173.7 1311.0,173.7 1311.0,175.1 1312.0,175.1 1312.0,176.7 1313.0,176.7 1313.0,181.4 1314.0,181.4 1314.0,185.8 1315.0,185.8 1315.0,190.4 1316.0,190.4 1316.0,194.8 1317.0,194.8 1317.0,198.4 1318.0,198.4 1318.0,201.9 1319.0,201.9 1319.0,205.5 1320.0,205.5 1320.0,205.5 1321.0,205.5 1321.0,196.0" stroke="#00f000"/><polyline points="47.0,191.0 100.0,191.0 150.0,192.5 200.0,196.0 231.0,198.9 250.0,201.5 271.0,203.8 296.0,204.2 307.9,202.3 319.8,200.1 331.7,198.5 353.0,198.5 357.8,197.3 382.8,197.3 391.1,200.1 403.0,203.7 412.5,204.2 424.4,201.3 438.6,199.4 452.9,195.4 467.1,195.4 470.7,196.3 477.8,195.9 489.7,189.4 495.7,189.4 500.4,193.5 508.7,201.3 524.2,199.4 531.3,196.3 537.3,194.0 545.6,176.4 558.6,173.3 567.0,181.6 571.7,182.8 577.7,188.7 587.2,187.5 590.0,188.8 603.1,196.4 605.5,195.5 611.4,179.3 615.0,174.5 618.5,155.0 628.0,174.5 631.6,193.1 638.8,198.3 643.5,172.1 649.5,144.8 652.3,144.8 655.4,180.5 662.5,186.4 667.3,161.4 672.0,173.3 676.8,150.7 682.7,141.2 687.5,140.8 691.1,164.5 694.6,159.1 699.4,137.7 705.3,136.5 708.2,128.2 711.3,136.5 713.7,146.0 716.0,179.3 719.6,179.3 723.2,186.4 726.7,169.8 730.3,179.3 735.1,169.8 738.6,141.2 739.8,116.3 741.7,116.3 744.6,141.2 747.0,172.1 750.5,184.0 752.9,159.8 755.3,176.9 758.8,199.5 760.7,181.7 762.4,194.7 764.8,194.7 767.2,133.6 768.4,133.6 770.7,165.0 771.9,190.0 775.5,175.7 775.5,175.7 780.2,175.7 780.2,188.3 783.6,188.3 783.6,166.9 788.3,166.9 788.3,181.7 790.7,181.7 790.7,150.7 791.9,150.7 791.9,118.6 795.5,118.6 795.5,109.1 797.8,109.1 797.8,100.8 800.2,100.8 800.2,100.8 800.9,100.8 800.9,129.3 803.8,129.3 803.8,136.5 805.7,136.5 805.7,186.4 808.1,186.4 808.1,159.1 809.0,159.1 809.0,159.1 810.4,159.1 810.4,179.3 812.1,179.3 812.1,190.0 813.8,190.0 813.8,174.5 816.9,174.5 816.9,168.6 818.5,168.6 818.5,185.2 820.0,185.2 820.0,161.4 822.3,161.4 822.3,141.2 824.0,141.2 824.0,122.2 825.9,122.2 825.9,119.8 827.6,119.8 827.6,155.5 829.5,155.5 829.5,125.8 831.1,125.8 831.1,104.4 832.8,104.4 832.8,131.7 834.7,131.7 834.7,144.8 837.1,144.8 837.1,130.5 838.7,130.5 838.7,155.5 841.8,155.5 841.8,174.5 844.7,174.5 844.7,151.9 847.3,151.9 847.3,175.7 848.5,175.7 848.5,195.9 850.2,195.9 850.2,175.7 851.3,175.7 851.3,151.9 854.9,151.9 854.9,134.1 858.0,134.1 858.0,163.8 860.9,163.8 860.9,130.5 863.7,130.5 863.7,186.4 865.6,186.4 865.6,153.1 866.8,153.1 866.8,96.0 868.5,96.0 868.5,94.9 870.4,94.9 870.4,138.9 872.3,138.9 872.3,138.9 873.9,138.9 873.9,102.0 875.6,102.0 875.6,136.5 877.5,136.5 877.5,182.9 879.9,182.9 879.9,166.2 882.7,166.2 882.7,162.6 885.1,162.6 885.1,195.9 887.5,195.9 887.5,173.3 889.9,173.3 889.9,203.1 891.8,203.1 891.8,191.2 894.1,191.2 894.1,156.7 896.5,156.7 896.5,179.3 898.9,179.3 898.9,154.3 901.3,154.3 901.3,125.8 902.9,125.8 902.9,167.4 904.1,167.4 904.1,203.1 906.0,203.1 906.0,178.1 907.9,178.1 907.9,198.3 909.6,198.3 909.6,181.7 910.8,181.7 910.8,115.1 912.7,115.1 912.7,94.9 914.4,94.9 914.4,146.0 916.0,146.0 916.0,186.4 918.4,186.4 918.4,174.5 920.3,174.5 920.3,175.5 922.2,175.5 922.2,146.0 923.9,146.0 923.9,157.9 925.5,157.9 925.5,178.1 927.9,178.1 927.9,150.7 930.5,150.7 930.5,198.3 933.4,198.3 933.4,160.3 934.6,160.3 934.6,136.5 936.2,136.5 936.2,193.6 938.1,193.6 938.1,153.1 939.8,153.1 939.8,181.7 942.2,181.7 942.2,166.2 944.6,166.2 944.6,187.6 946.5,187.6 946.5,174.5 948.4,174.5 948.4,195.9 950.0,195.9 950.0,166.2 951.7,166.2 951.7,192.4 953.6,192.4 953.6,160.3 955.5,160.3 955.5,149.6 957.2,149.6 957.2,176.9 959.5,176.9 959.5,131.7 961.9,131.7 961.9,179.3 964.3,179.3 964.3,148.4 966.2,148.4 966.2,124.6 968.3,124.6 968.3,127.0 970.2,127.0 970.2,169.8 971.4,169.8 971.4,187.6 973.8,187.6 973.8,131.7 976.2,131.7 976.2,168.6 978.1,168.6 978.1,159.1 979.8,159.1 979.8,191.2 981.5,191.2 981.5,127.7 982.5,127.7 982.5,179.3 985.0,179.3 985.0,165.2 986.0,165.2 986.0,166.0 988.0,166.0 988.0,141.8 989.0,141.8 989.0,177.9 990.5,177.9 990.5,141.8 991.5,141.8 991.5,132.1 992.5,132.1 992.5,183.7 994.5,183.7 994.5,130.2 995.5,130.2 995.5,186.8 997.0,186.8 997.0,130.7 998.0,130.7 998.0,151.6 1001.0,151.6 1001.0,128.7 1002.0,128.7 1002.0,173.5 1004.5,173.5 1004.5,157.0 1007.5,157.0 1007.5,175.3 1008.5,175.3 1008.5,183.4 1010.5,183.4 1010.5,168.4 1011.5,168.4 1011.5,180.7 1012.5,180.7 1012.5,158.4 1013.5,158.4 1013.5,175.9 1016.5,175.9 1016.5,142.4 1019.5,142.4 1019.5,178.0 1020.5,178.0 1020.5,154.4 1021.5,154.4 1021.5,175.4 1024.5,175.4 1024.5,124.4 1025.5,124.4 1025.5,167.8 1027.5,167.8 1027.5,140.3 1028.5,140.3 1028.5,172.7 1031.5,172.7 1031.5,155.9 1032.5,155.9 1032.5,160.1 1034.5,160.1 1034.5,138.7 1035.5,138.7 1035.5,147.5 1038.5,147.5 1038.5,131.7 1039.5,131.7 1039.5,186.6 1042.5,186.6 1042.5,125.7 1043.5,125.7 1043.5,177.0 1046.0,177.0 1046.0,153.0 1047.0,153.0 1047.0,179.5 1048.5,179.5 1048.5,164.4 1051.5,164.4 1051.5,175.7 1052.5,175.7 1052.5,136.4 1053.5,136.4 1053.5,169.9 1056.5,169.9 1056.5,172.8 1058.0,172.8 1058.0,126.5 1059.0,126.5 1059.0,149.4 1061.0,149.4 1061.0,115.0 1062.0,115.0 1062.0,181.4 1063.5,181.4 1063.5,127.2 1064.5,127.2 1064.5,152.1 1066.5,152.1 1066.5,107.0 1067.5,107.0 1067.5,176.4 1069.0,176.4 1069.0,150.7 1071.5,150.7 1071.5,160.7 1072.5,160.7 1072.5,127.6 1074.0,127.6 1074.0,173.2 1075.0,173.2 1075.0,120.4 1077.5,120.4 1077.5,156.0 1078.5,156.0 1078.5,127.7 1079.5,127.7 1079.5,177.3 1081.5,177.3 1081.5,126.4 1082.5,126.4 1082.5,172.6 1085.0,172.6 1085.0,100.7 1086.0,100.7 1086.0,151.7 1088.5,151.7 1088.5,138.2 1089.5,138.2 1089.5,174.1 1091.5,174.1 1091.5,116.8 1093.0,116.8 1093.0,139.5 1094.0,139.5 1094.0,102.9 1097.0,102.9 1097.0,167.7 1098.0,167.7 1098.0,139.9 1100.5,139.9 1100.5,122.0 1101.5,122.0 1101.5,129.4 1103.0,129.4 1103.0,172.4 1104.0,172.4 1104.0,112.2 1106.0,112.2 1106.0,147.6 1107.0,147.6 1107.0,118.6 1108.0,118.6 1108.0,168.0 1109.5,168.0 1109.5,97.9 1112.5,97.9 1112.5,155.1 1113.5,155.1 1113.5,97.5 1114.5,97.5 1114.5,128.8 1117.5,128.8 1117.5,96.1 1118.5,96.1 1118.5,165.9 1121.5,165.9 1121.5,146.6 1123.5,146.6 1123.5,139.0 1124.5,139.0 1124.5,101.1 1125.5,101.1 1125.5,124.5 1128.5,124.5 1128.5,96.1 1129.5,96.1 1129.5,132.7 1132.5,132.7 1132.5,108.1 1133.5,108.1 1133.5,146.8 1135.0,146.8 1135.0,101.6 1136.0,101.6 1136.0,157.5 1138.0,157.5 1138.0,141.7 1139.0,141.7 1139.0,135.3 1141.5,135.3 1141.5,100.9 1143.5,100.9 1143.5,149.3 1144.5,149.3 1144.5,105.2 1145.5,105.2 1145.5,152.9 1147.0,152.9 1147.0,103.8 1148.0,103.8 1148.0,145.9 1150.0,145.9 1150.0,122.1 1151.0,122.1 1151.0,113.8 1153.0,113.8 1153.0,144.4 1154.0,144.4 1154.0,116.1 1155.0,116.1 1155.0,140.5 1157.5,140.5 1157.5,118.8 1158.5,118.8 1158.5,145.9 1161.0,145.9 1161.0,103.9 1162.5,103.9 1162.5,98.4 1163.5,98.4 1163.5,139.0 1166.5,139.0 1166.5,103.9 1169.0,103.9 1169.0,130.3 1170.0,130.3 1170.0,109.4 1171.0,109.4 1171.0,140.4 1172.0,140.4 1172.0,109.9 1173.0,109.9 1173.0,136.2 1174.0,136.2 1174.0,106.3 1175.0,106.3 1175.0,144.2 1176.0,144.2 1176.0,119.9 1177.0,119.9 1177.0,143.6 1178.0,143.6 1178.0,143.5 1179.0,143.5 1179.0,117.3 1180.0,117.3 1180.0,134.1 1181.0,134.1 1181.0,135.8 1182.0,135.8 1182.0,129.5 1183.0,129.5 1183.0,118.4 1184.0,118.4 1184.0,135.5 1185.0,135.5 1185.0,120.2 1186.0,120.2 1186.0,136.4 1187.0,136.4 1187.0,103.7 1188.0,103.7 1188.0,143.2 1189.0,143.2 1189.0,116.9 1190.0,116.9 1190.0,140.7 1191.0,140.7 1191.0,112.6 1192.0,112.6 1192.0,127.1 1194.0,127.1 1194.0,117.5 1195.0,117.5 1195.0,140.3 1196.5,140.3 1196.5,118.2 1197.5,118.2 1197.5,127.7 1199.5,127.7 1199.5,130.1 1200.5,130.1 1200.5,139.7 1202.5,139.7 1202.5,113.7 1203.5,113.7 1203.5,140.4 1206.0,140.4 1206.0,114.8 1207.0,114.8 1207.0,134.5 1209.0,134.5 1209.0,114.2 1210.0,114.2 1210.0,134.4 1212.0,134.4 1212.0,123.7 1213.0,123.7 1213.0,139.5 1215.0,139.5 1215.0,140.4 1216.5,140.4 1216.5,117.7 1217.5,117.7 1217.5,135.0 1219.0,135.0 1219.0,111.9 1220.0,111.9 1220.0,139.3 1222.0,139.3 1222.0,116.9 1223.0,116.9 1223.0,139.1 1225.5,139.1 1225.5,118.8 1226.5,118.8 1226.5,130.0 1229.0,130.0 1229.0,129.2 1230.0,129.2 1230.0,128.7 1232.5,128.7 1232.5,137.0 1233.5,137.0 1233.5,130.5 1236.0,130.5 1236.0,126.7 1237.0,126.7 1237.0,139.5 1239.5,139.5 1239.5,130.0 1240.5,130.0 1240.5,125.9 1243.0,125.9 1243.0,120.5 1244.0,120.5 1244.0,130.3 1245.5,130.3 1245.5,122.2 1246.5,122.2 1246.5,128.7 1248.5,128.7 1248.5,117.2 1249.5,117.2 1249.5,129.3 1252.0,129.3 1252.0,119.8 1253.0,119.8 1253.0,139.0 1255.5,139.0 1255.5,125.9 1256.5,125.9 1256.5,131.9 1258.5,131.9 1258.5,124.7 1259.5,124.7 1259.5,133.5 1261.0,133.5 1261.0,124.7 1262.0,124.7 1262.0,132.7 1263.5,132.7 1263.5,140.7 1265.0,140.7 1265.0,147.6 1267.0,147.6 1267.0,149.8 1268.0,149.8 1268.0,149.7 1270.0,149.7 1270.0,144.7 1272.0,144.7 1272.0,142.4 1273.5,142.4 1273.5,143.2 1275.5,143.2 1275.5,140.7 1277.5,140.7 1277.5,142.4 1279.0,142.4 1279.0,143.9 1280.5,143.9 1280.5,148.1 1281.5,148.1 1281.5,144.8 1283.5,144.8 1283.5,142.0 1285.5,142.0 1285.5,146.1 1287.0,146.1 1287.0,148.8 1288.0,148.8 1288.0,149.5 1290.0,149.5 1290.0,142.7 1291.0,142.7 1291.0,148.6 1292.0,148.6 1292.0,148.4 1293.0,148.4 1293.0,153.4 1294.5,153.4 1294.5,152.0 1296.0,152.0 1296.0,146.4 1297.0,146.4 1297.0,146.0 1298.0,146.0 1298.0,148.0 1300.0,148.0 1300.0,152.0 1301.5,152.0 1301.5,149.9 1303.5,149.9 1303.5,151.2 1304.5,151.2 1304.5,154.4 1305.5,154.4 1305.5,155.9 1307.0,155.9 1307.0,158.9 1308.0,158.9 1308.0,159.6 1309.5,159.6 1309.5,161.1 1311.0,161.1 1311.0,156.1 1312.0,156.1 1312.0,159.5 1313.5,159.5 1313.5,163.3 1315.0,163.3 1315.0,166.1 1316.5,166.1 1316.5,165.1 1317.5,165.1 1317.5,159.0 1319.0,159.0 1319.0,148.4 1320.3,148.4 1320.3,148.4 1320.8,148.4 1320.8,196.0" stroke="#f00000"/><rect x="1320" y="148" width="2" height="48" fill="#f00000"/><rect x="1319" y="196" width="3" height="10" fill="#00f000"/></g><rect x="307" y="60" width="1" height="146" fill="#fff" shape-rendering="crispEdges"/><text x="1320.3" y="70.6" text-anchor="end" font-size="11.6" font-style="italic" font-weight="bold" letter-spacing=".42" fill="#e8e8e8">SpectraFoo</text></svg>
<div class="a" style="left:44.2px;top:57px;width:254.8px;height:1px;background:#7c7c7c"></div>
<div class="a" style="left:46px;top:58px;width:253px;height:141px;background:#ececec;overflow:hidden">
<div class="a" style="left:0;top:0;width:253px;height:15px;background:linear-gradient(#f8f8f8,#e4e4e4);border-top:1px solid #fbfbfb;box-sizing:border-box;border-bottom:1px solid #b0b0b0"></div>
<div class="a" style="left:6.0px;top:2px;width:11px;height:11px;border-radius:50%;box-sizing:border-box;border:1px solid #bdbdbd;background:linear-gradient(#e6e6e6,#f6f6f6)"></div>
<div class="a" style="left:24.0px;top:2px;width:11px;height:11px;border-radius:50%;box-sizing:border-box;border:1px solid #bdbdbd;background:linear-gradient(#e6e6e6,#f6f6f6)"></div>
<div class="a" style="left:41.8px;top:2px;width:11px;height:11px;border-radius:50%;box-sizing:border-box;border:1px solid #bdbdbd;background:linear-gradient(#e6e6e6,#f6f6f6)"></div>
<div class="t" style="left:95px;top:2.8px;font-size:11px;letter-spacing:.3px;color:#3a3a3a">Overlay List</div>
<div class="a" style="left:0;top:15px;width:239px;height:15px;background:linear-gradient(#ebebeb,#dcdcdc);border-bottom:1px solid #9e9e9e"></div>
<div class="a" style="left:239px;top:15px;width:14px;height:14px;background:linear-gradient(#e9e9e9,#d9d9d9);border-bottom:1px solid #b5b5b5"></div>
<div class="t b" style="left:3px;top:17.3px;font-size:10.5px">Snapshot Name</div>
<div class="t b" style="left:155.3px;top:17.3px;font-size:10.5px">V</div>
<div class="t b" style="left:173.3px;top:17.3px;font-size:10.5px">S</div>
<div class="t b" style="left:193.3px;top:17.3px;font-size:10.5px">I</div>
<div class="t b" style="left:209.3px;top:17.3px;font-size:10.5px;letter-spacing:-.3px">Fade</div>
<svg style="left:243px;top:18px" width="8" height="9" viewBox="0 0 8 9"><path d="M0.5 0.5 L7.5 4.5 L0.5 8.5 Z" fill="#111"/></svg>
<div class="a" style="left:239.5px;top:30px;width:13.5px;height:98px;background:#fafafa;border-left:1px solid #e2e2e2"></div>
<div class="a" style="left:243px;top:102px;width:7.6px;height:25px;border-radius:4px;background:#c1c1c1"></div>
<div class="a" style="left:242px;top:130px;width:11px;height:11px;background:#f8f8f8"></div>
<svg style="left:242px;top:130px" width="11" height="11" viewBox="0 0 11 11"><path d="M1 11 L11 1 M5 11 L11 5 M9 11 L11 9" stroke="#a9a9a9" stroke-width="1" fill="none"/></svg>
<div class="sw" style="left:3.3px;top:32.1px"><i style="background:#ffff00"></i></div>
<div class="rowt" style="left:21px;top:33.8px">Column 3 one speaker</div>
<div class="cb" style="left:153px;top:33.2px"></div>
<div class="cb" style="left:171px;top:33.2px"></div>
<div class="cb" style="left:189px;top:33.2px"></div>
<div class="pp" style="left:207.3px;top:32.0px"></div>
<div class="t b" style="left:211.5px;top:33.7px;font-size:10px;letter-spacing:-.2px">...</div>
<svg style="left:222.6px;top:34.5px" width="6" height="10" viewBox="0 0 6 10"><path d="M3 1.2 L4.7 3.6 L1.3 3.6 Z M3 8.8 L4.7 6.4 L1.3 6.4 Z" fill="#3a3a3a"/></svg>
<div class="sw" style="left:3.3px;top:48.1px"><i style="background:#ff00ff"></i></div>
<div class="rowt" style="left:21px;top:49.8px">Inside middle isle</div>
<div class="cb" style="left:153px;top:49.2px"></div>
<div class="cb" style="left:171px;top:49.2px"></div>
<div class="cb" style="left:189px;top:49.2px"></div>
<div class="pp" style="left:207.3px;top:48.0px"></div>
<div class="t b" style="left:211.5px;top:49.7px;font-size:10px;letter-spacing:-.2px">...</div>
<svg style="left:222.6px;top:50.5px" width="6" height="10" viewBox="0 0 6 10"><path d="M3 1.2 L4.7 3.6 L1.3 3.6 Z M3 8.8 L4.7 6.4 L1.3 6.4 Z" fill="#3a3a3a"/></svg>
<div class="sw" style="left:3.3px;top:64.1px"><i style="background:#00ffff"></i></div>
<div class="rowt" style="left:21px;top:65.8px">middle isle middle</div>
<div class="cb" style="left:153px;top:65.2px"></div>
<div class="cb" style="left:171px;top:65.2px"></div>
<div class="cb" style="left:189px;top:65.2px"></div>
<div class="pp" style="left:207.3px;top:64.0px"></div>
<div class="t b" style="left:211.5px;top:65.7px;font-size:10px;letter-spacing:-.2px">...</div>
<svg style="left:222.6px;top:66.5px" width="6" height="10" viewBox="0 0 6 10"><path d="M3 1.2 L4.7 3.6 L1.3 3.6 Z M3 8.8 L4.7 6.4 L1.3 6.4 Z" fill="#3a3a3a"/></svg>
<div class="sw" style="left:3.3px;top:80.1px"><i style="background:#80ff00"></i></div>
<div class="rowt" style="left:21px;top:81.8px">middle isle L/R singles</div>
<div class="cb" style="left:153px;top:81.2px"></div>
<div class="cb" style="left:171px;top:81.2px"></div>
<div class="cb" style="left:189px;top:81.2px"></div>
<div class="pp" style="left:207.3px;top:80.0px"></div>
<div class="t b" style="left:211.5px;top:81.7px;font-size:10px;letter-spacing:-.2px">...</div>
<svg style="left:222.6px;top:82.5px" width="6" height="10" viewBox="0 0 6 10"><path d="M3 1.2 L4.7 3.6 L1.3 3.6 Z M3 8.8 L4.7 6.4 L1.3 6.4 Z" fill="#3a3a3a"/></svg>
<div class="sw" style="left:3.3px;top:96.1px"><i style="background:#ff8000"></i></div>
<div class="rowt" style="left:21px;top:97.8px">HL 2nd row</div>
<div class="cb" style="left:153px;top:97.2px"></div>
<div class="cb" style="left:171px;top:97.2px"></div>
<div class="cb" style="left:189px;top:97.2px"></div>
<div class="pp" style="left:207.3px;top:96.0px"></div>
<div class="t b" style="left:211.5px;top:97.7px;font-size:10px;letter-spacing:-.2px">...</div>
<svg style="left:222.6px;top:98.5px" width="6" height="10" viewBox="0 0 6 10"><path d="M3 1.2 L4.7 3.6 L1.3 3.6 Z M3 8.8 L4.7 6.4 L1.3 6.4 Z" fill="#3a3a3a"/></svg>
<div class="sw" style="left:3.3px;top:112.1px"><i style="background:#ffffff"></i></div>
<div class="rowt" style="left:21px;top:113.8px">HL Isle</div>
<div class="cb" style="left:153px;top:113.2px"></div>
<div class="cb" style="left:171px;top:113.2px"></div>
<div class="cb" style="left:189px;top:113.2px"></div>
<div class="pp" style="left:207.3px;top:112.0px"></div>
<div class="t b" style="left:211.5px;top:113.7px;font-size:10px;letter-spacing:-.2px">...</div>
<svg style="left:222.6px;top:114.5px" width="6" height="10" viewBox="0 0 6 10"><path d="M3 1.2 L4.7 3.6 L1.3 3.6 Z M3 8.8 L4.7 6.4 L1.3 6.4 Z" fill="#3a3a3a"/></svg>
<div class="sw" style="left:3.3px;top:128.1px"><i style="background:#00ff00"></i></div>
<div class="rowt" style="left:21px;top:129.8px">HL back row</div>
<div class="cb" style="left:153px;top:129.2px"></div>
<div class="cb" style="left:171px;top:129.2px"></div>
<div class="cb" style="left:189px;top:129.2px"></div>
<div class="pp" style="left:207.3px;top:128.0px"></div>
<div class="t b" style="left:211.5px;top:129.7px;font-size:10px;letter-spacing:-.2px">...</div>
<svg style="left:222.6px;top:130.5px" width="6" height="10" viewBox="0 0 6 10"><path d="M3 1.2 L4.7 3.6 L1.3 3.6 Z M3 8.8 L4.7 6.4 L1.3 6.4 Z" fill="#3a3a3a"/></svg>
</div>
<svg style="left:0;top:0" width="1333" height="631" viewBox="0 0 1333 631" font-family="Liberation Sans, sans-serif"><g shape-rendering="crispEdges"><rect x="43.3" y="261.3" width="1281.8" height="152.8" fill="#f6f6f6" shape-rendering="auto"/><rect x="44.1" y="262.1" width="1279.9" height="150.9" fill="#000" shape-rendering="auto"/><rect x="47" y="275" width="1275" height="1" fill="#606060"/><rect x="47" y="278" width="1275" height="1" fill="#333333"/><rect x="47" y="282" width="1275" height="1" fill="#333333"/><rect x="47" y="285" width="1275" height="1" fill="#606060"/><rect x="47" y="288" width="1275" height="1" fill="#333333"/><rect x="47" y="292" width="1275" height="1" fill="#333333"/><rect x="47" y="295" width="1275" height="1" fill="#606060"/><rect x="47" y="299" width="1275" height="1" fill="#333333"/><rect x="47" y="302" width="1275" height="1" fill="#333333"/><rect x="47" y="306" width="1275" height="1" fill="#606060"/><rect x="47" y="309" width="1275" height="1" fill="#333333"/><rect x="47" y="313" width="1275" height="1" fill="#333333"/><rect x="47" y="316" width="1275" height="1" fill="#606060"/><rect x="47" y="320" width="1275" height="1" fill="#333333"/><rect x="47" y="323" width="1275" height="1" fill="#333333"/><rect x="47" y="327" width="1275" height="1" fill="#606060"/><rect x="47" y="330" width="1275" height="1" fill="#333333"/><rect x="47" y="334" width="1275" height="1" fill="#333333"/><rect x="47" y="337" width="1275" height="1" fill="#606060"/><rect x="47" y="340" width="1275" height="1" fill="#333333"/><rect x="47" y="344" width="1275" height="1" fill="#333333"/><rect x="47" y="347" width="1275" height="1" fill="#606060"/><rect x="47" y="351" width="1275" height="1" fill="#333333"/><rect x="47" y="354" width="1275" height="1" fill="#333333"/><rect x="47" y="358" width="1275" height="1" fill="#606060"/><rect x="47" y="361" width="1275" height="1" fill="#333333"/><rect x="47" y="365" width="1275" height="1" fill="#333333"/><rect x="47" y="368" width="1275" height="1" fill="#606060"/><rect x="47" y="372" width="1275" height="1" fill="#333333"/><rect x="47" y="375" width="1275" height="1" fill="#333333"/><rect x="47" y="379" width="1275" height="1" fill="#606060"/><rect x="47" y="382" width="1275" height="1" fill="#333333"/><rect x="47" y="386" width="1275" height="1" fill="#333333"/><rect x="47" y="389" width="1275" height="1" fill="#606060"/><rect x="47" y="392" width="1275" height="1" fill="#333333"/><rect x="47" y="396" width="1275" height="1" fill="#333333"/><rect x="47" y="399" width="1275" height="1" fill="#606060"/><rect x="179" y="265" width="1" height="146" fill="#686868"/><rect x="189" y="265" width="1" height="146" fill="#333333"/><rect x="200" y="265" width="1" height="146" fill="#333333"/><rect x="212" y="265" width="1" height="146" fill="#333333"/><rect x="224" y="265" width="1" height="146" fill="#333333"/><rect x="236" y="265" width="1" height="146" fill="#333333"/><rect x="249" y="265" width="1" height="146" fill="#686868"/><rect x="262" y="265" width="1" height="146" fill="#333333"/><rect x="276" y="265" width="1" height="146" fill="#333333"/><rect x="290" y="265" width="1" height="146" fill="#333333"/><rect x="304" y="265" width="1" height="146" fill="#333333"/><rect x="319" y="265" width="1" height="146" fill="#333333"/><rect x="334" y="265" width="1" height="146" fill="#686868"/><rect x="349" y="265" width="1" height="146" fill="#333333"/><rect x="364" y="265" width="1" height="146" fill="#333333"/><rect x="380" y="265" width="1" height="146" fill="#333333"/><rect x="396" y="265" width="1" height="146" fill="#333333"/><rect x="412" y="265" width="1" height="146" fill="#333333"/><rect x="428" y="265" width="1" height="146" fill="#686868"/><rect x="445" y="265" width="1" height="146" fill="#333333"/><rect x="461" y="265" width="1" height="146" fill="#333333"/><rect x="478" y="265" width="1" height="146" fill="#333333"/><rect x="495" y="265" width="1" height="146" fill="#333333"/><rect x="512" y="265" width="1" height="146" fill="#333333"/><rect x="529" y="265" width="1" height="146" fill="#686868"/><rect x="546" y="265" width="1" height="146" fill="#333333"/><rect x="563" y="265" width="1" height="146" fill="#333333"/><rect x="580" y="265" width="1" height="146" fill="#333333"/><rect x="598" y="265" width="1" height="146" fill="#333333"/><rect x="615" y="265" width="1" height="146" fill="#333333"/><rect x="632" y="265" width="1" height="146" fill="#686868"/><rect x="650" y="265" width="1" height="146" fill="#333333"/><rect x="667" y="265" width="1" height="146" fill="#333333"/><rect x="685" y="265" width="1" height="146" fill="#333333"/><rect x="702" y="265" width="1" height="146" fill="#333333"/><rect x="720" y="265" width="1" height="146" fill="#333333"/><rect x="738" y="265" width="1" height="146" fill="#686868"/><rect x="755" y="265" width="1" height="146" fill="#333333"/><rect x="773" y="265" width="1" height="146" fill="#333333"/><rect x="791" y="265" width="1" height="146" fill="#333333"/><rect x="808" y="265" width="1" height="146" fill="#333333"/><rect x="826" y="265" width="1" height="146" fill="#333333"/><rect x="844" y="265" width="1" height="146" fill="#686868"/><rect x="861" y="265" width="1" height="146" fill="#333333"/><rect x="879" y="265" width="1" height="146" fill="#333333"/><rect x="897" y="265" width="1" height="146" fill="#333333"/><rect x="915" y="265" width="1" height="146" fill="#333333"/><rect x="932" y="265" width="1" height="146" fill="#333333"/><rect x="950" y="265" width="1" height="146" fill="#686868"/><rect x="968" y="265" width="1" height="146" fill="#333333"/><rect x="986" y="265" width="1" height="146" fill="#333333"/><rect x="1004" y="265" width="1" height="146" fill="#333333"/><rect x="1021" y="265" width="1" height="146" fill="#333333"/><rect x="1039" y="265" width="1" height="146" fill="#333333"/><rect x="1057" y="265" width="1" height="146" fill="#686868"/><rect x="1075" y="265" width="1" height="146" fill="#333333"/><rect x="1093" y="265" width="1" height="146" fill="#333333"/><rect x="1110" y="265" width="1" height="146" fill="#333333"/><rect x="1128" y="265" width="1" height="146" fill="#333333"/><rect x="1146" y="265" width="1" height="146" fill="#333333"/><rect x="1164" y="265" width="1" height="146" fill="#686868"/><rect x="1182" y="265" width="1" height="146" fill="#333333"/><rect x="1200" y="265" width="1" height="146" fill="#333333"/><rect x="1217" y="265" width="1" height="146" fill="#333333"/><rect x="1235" y="265" width="1" height="146" fill="#333333"/><rect x="1253" y="265" width="1" height="146" fill="#333333"/><rect x="1271" y="265" width="1" height="146" fill="#686868"/><rect x="1289" y="265" width="1" height="146" fill="#333333"/><rect x="1307" y="265" width="1" height="146" fill="#333333"/><rect x="46" y="264" width="1277" height="1" fill="#ffffff"/><rect x="46" y="264" width="1" height="148" fill="#ffffff"/><rect x="46" y="411" width="1277" height="1" fill="#7c7c7c"/><rect x="1322" y="264" width="1" height="148" fill="#7c7c7c"/><rect x="178" y="414" width="3" height="7" fill="#f5f5f5"/><rect x="179" y="413" width="1" height="7" fill="#000"/><rect x="188" y="414" width="3" height="4" fill="#f5f5f5"/><rect x="189" y="413" width="1" height="4" fill="#000"/><rect x="199" y="414" width="3" height="4" fill="#f5f5f5"/><rect x="200" y="413" width="1" height="4" fill="#000"/><rect x="211" y="414" width="3" height="4" fill="#f5f5f5"/><rect x="212" y="413" width="1" height="4" fill="#000"/><rect x="223" y="414" width="3" height="4" fill="#f5f5f5"/><rect x="224" y="413" width="1" height="4" fill="#000"/><rect x="235" y="414" width="3" height="4" fill="#f5f5f5"/><rect x="236" y="413" width="1" height="4" fill="#000"/><rect x="248" y="414" width="3" height="7" fill="#f5f5f5"/><rect x="249" y="413" width="1" height="7" fill="#000"/><rect x="261" y="414" width="3" height="4" fill="#f5f5f5"/><rect x="262" y="413" width="1" height="4" fill="#000"/><rect x="275" y="414" width="3" height="4" fill="#f5f5f5"/><rect x="276" y="413" width="1" height="4" fill="#000"/><rect x="289" y="414" width="3" height="4" fill="#f5f5f5"/><rect x="290" y="413" width="1" height="4" fill="#000"/><rect x="303" y="414" width="3" height="4" fill="#f5f5f5"/><rect x="304" y="413" width="1" height="4" fill="#000"/><rect x="318" y="414" width="3" height="4" fill="#f5f5f5"/><rect x="319" y="413" width="1" height="4" fill="#000"/><rect x="333" y="414" width="3" height="7" fill="#f5f5f5"/><rect x="334" y="413" width="1" height="7" fill="#000"/><rect x="348" y="414" width="3" height="4" fill="#f5f5f5"/><rect x="349" y="413" width="1" height="4" fill="#000"/><rect x="363" y="414" width="3" height="4" fill="#f5f5f5"/><rect x="364" y="413" width="1" height="4" fill="#000"/><rect x="379" y="414" width="3" height="4" fill="#f5f5f5"/><rect x="380" y="413" width="1" height="4" fill="#000"/><rect x="395" y="414" width="3" height="4" fill="#f5f5f5"/><rect x="396" y="413" width="1" height="4" fill="#000"/><rect x="411" y="414" width="3" height="4" fill="#f5f5f5"/><rect x="412" y="413" width="1" height="4" fill="#000"/><rect x="427" y="414" width="3" height="7" fill="#f5f5f5"/><rect x="428" y="413" width="1" height="7" fill="#000"/><rect x="444" y="414" width="3" height="4" fill="#f5f5f5"/><rect x="445" y="413" width="1" height="4" fill="#000"/><rect x="460" y="414" width="3" height="4" fill="#f5f5f5"/><rect x="461" y="413" width="1" height="4" fill="#000"/><rect x="477" y="414" width="3" height="4" fill="#f5f5f5"/><rect x="478" y="413" width="1" height="4" fill="#000"/><rect x="494" y="414" width="3" height="4" fill="#f5f5f5"/><rect x="495" y="413" width="1" height="4" fill="#000"/><rect x="511" y="414" width="3" height="4" fill="#f5f5f5"/><rect x="512" y="413" width="1" height="4" fill="#000"/><rect x="528" y="414" width="3" height="7" fill="#f5f5f5"/><rect x="529" y="413" width="1" height="7" fill="#000"/><rect x="545" y="414" width="3" height="4" fill="#f5f5f5"/><rect x="546" y="413" width="1" height="4" fill="#000"/><rect x="562" y="414" width="3" height="4" fill="#f5f5f5"/><rect x="563" y="413" width="1" height="4" fill="#000"/><rect x="579" y="414" width="3" height="4" fill="#f5f5f5"/><rect x="580" y="413" width="1" height="4" fill="#000"/><rect x="597" y="414" width="3" height="4" fill="#f5f5f5"/><rect x="598" y="413" width="1" height="4" fill="#000"/><rect x="614" y="414" width="3" height="4" fill="#f5f5f5"/><rect x="615" y="413" width="1" height="4" fill="#000"/><rect x="631" y="414" width="3" height="7" fill="#f5f5f5"/><rect x="632" y="413" width="1" height="7" fill="#000"/><rect x="649" y="414" width="3" height="4" fill="#f5f5f5"/><rect x="650" y="413" width="1" height="4" fill="#000"/><rect x="666" y="414" width="3" height="4" fill="#f5f5f5"/><rect x="667" y="413" width="1" height="4" fill="#000"/><rect x="684" y="414" width="3" height="4" fill="#f5f5f5"/><rect x="685" y="413" width="1" height="4" fill="#000"/><rect x="701" y="414" width="3" height="4" fill="#f5f5f5"/><rect x="702" y="413" width="1" height="4" fill="#000"/><rect x="719" y="414" width="3" height="4" fill="#f5f5f5"/><rect x="720" y="413" width="1" height="4" fill="#000"/><rect x="737" y="414" width="3" height="7" fill="#f5f5f5"/><rect x="738" y="413" width="1" height="7" fill="#000"/><rect x="754" y="414" width="3" height="4" fill="#f5f5f5"/><rect x="755" y="413" width="1" height="4" fill="#000"/><rect x="772" y="414" width="3" height="4" fill="#f5f5f5"/><rect x="773" y="413" width="1" height="4" fill="#000"/><rect x="790" y="414" width="3" height="4" fill="#f5f5f5"/><rect x="791" y="413" width="1" height="4" fill="#000"/><rect x="807" y="414" width="3" height="4" fill="#f5f5f5"/><rect x="808" y="413" width="1" height="4" fill="#000"/><rect x="825" y="414" width="3" height="4" fill="#f5f5f5"/><rect x="826" y="413" width="1" height="4" fill="#000"/><rect x="843" y="414" width="3" height="7" fill="#f5f5f5"/><rect x="844" y="413" width="1" height="7" fill="#000"/><rect x="860" y="414" width="3" height="4" fill="#f5f5f5"/><rect x="861" y="413" width="1" height="4" fill="#000"/><rect x="878" y="414" width="3" height="4" fill="#f5f5f5"/><rect x="879" y="413" width="1" height="4" fill="#000"/><rect x="896" y="414" width="3" height="4" fill="#f5f5f5"/><rect x="897" y="413" width="1" height="4" fill="#000"/><rect x="914" y="414" width="3" height="4" fill="#f5f5f5"/><rect x="915" y="413" width="1" height="4" fill="#000"/><rect x="931" y="414" width="3" height="4" fill="#f5f5f5"/><rect x="932" y="413" width="1" height="4" fill="#000"/><rect x="949" y="414" width="3" height="7" fill="#f5f5f5"/><rect x="950" y="413" width="1" height="7" fill="#000"/><rect x="967" y="414" width="3" height="4" fill="#f5f5f5"/><rect x="968" y="413" width="1" height="4" fill="#000"/><rect x="985" y="414" width="3" height="4" fill="#f5f5f5"/><rect x="986" y="413" width="1" height="4" fill="#000"/><rect x="1003" y="414" width="3" height="4" fill="#f5f5f5"/><rect x="1004" y="413" width="1" height="4" fill="#000"/><rect x="1020" y="414" width="3" height="4" fill="#f5f5f5"/><rect x="1021" y="413" width="1" height="4" fill="#000"/><rect x="1038" y="414" width="3" height="4" fill="#f5f5f5"/><rect x="1039" y="413" width="1" height="4" fill="#000"/><rect x="1056" y="414" width="3" height="7" fill="#f5f5f5"/><rect x="1057" y="413" width="1" height="7" fill="#000"/><rect x="1074" y="414" width="3" height="4" fill="#f5f5f5"/><rect x="1075" y="413" width="1" height="4" fill="#000"/><rect x="1092" y="414" width="3" height="4" fill="#f5f5f5"/><rect x="1093" y="413" width="1" height="4" fill="#000"/><rect x="1109" y="414" width="3" height="4" fill="#f5f5f5"/><rect x="1110" y="413" width="1" height="4" fill="#000"/><rect x="1127" y="414" width="3" height="4" fill="#f5f5f5"/><rect x="1128" y="413" width="1" height="4" fill="#000"/><rect x="1145" y="414" width="3" height="4" fill="#f5f5f5"/><rect x="1146" y="413" width="1" height="4" fill="#000"/><rect x="1163" y="414" width="3" height="7" fill="#f5f5f5"/><rect x="1164" y="413" width="1" height="7" fill="#000"/><rect x="1181" y="414" width="3" height="4" fill="#f5f5f5"/><rect x="1182" y="413" width="1" height="4" fill="#000"/><rect x="1199" y="414" width="3" height="4" fill="#f5f5f5"/><rect x="1200" y="413" width="1" height="4" fill="#000"/><rect x="1216" y="414" width="3" height="4" fill="#f5f5f5"/><rect x="1217" y="413" width="1" height="4" fill="#000"/><rect x="1234" y="414" width="3" height="4" fill="#f5f5f5"/><rect x="1235" y="413" width="1" height="4" fill="#000"/><rect x="1252" y="414" width="3" height="4" fill="#f5f5f5"/><rect x="1253" y="413" width="1" height="4" fill="#000"/><rect x="1270" y="414" width="3" height="7" fill="#f5f5f5"/><rect x="1271" y="413" width="1" height="7" fill="#000"/><rect x="1288" y="414" width="3" height="4" fill="#f5f5f5"/><rect x="1289" y="413" width="1" height="4" fill="#000"/><rect x="1306" y="414" width="3" height="4" fill="#f5f5f5"/><rect x="1307" y="413" width="1" height="4" fill="#000"/><text x="179.7" y="430.5" text-anchor="middle" font-size="10.5" fill="#000">8</text><text x="249.9" y="430.5" text-anchor="middle" font-size="10.5" fill="#000">16</text><text x="334.6" y="430.5" text-anchor="middle" font-size="10.5" fill="#000">31</text><text x="429.1" y="430.5" text-anchor="middle" font-size="10.5" fill="#000">63</text><text x="529.5" y="430.5" text-anchor="middle" font-size="10.5" fill="#000">125</text><text x="633.1" y="430.5" text-anchor="middle" font-size="10.5" fill="#000">250</text><text x="738.4" y="430.5" text-anchor="middle" font-size="10.5" fill="#000">500</text><text x="844.5" y="430.5" text-anchor="middle" font-size="10.5" fill="#000">1k</text><text x="951.1" y="430.5" text-anchor="middle" font-size="10.5" fill="#000">2k</text><text x="1057.9" y="430.5" text-anchor="middle" font-size="10.5" fill="#000">4k</text><text x="1164.8" y="430.5" text-anchor="middle" font-size="10.5" fill="#000">8k</text><text x="1271.7" y="430.5" text-anchor="middle" font-size="10.5" fill="#000">16k</text><rect x="39" y="399.76" width="6" height="1.5" fill="#000" shape-rendering="auto"/><rect x="42" y="396.29" width="3" height="1.5" fill="#000" shape-rendering="auto"/><rect x="42" y="392.82" width="3" height="1.5" fill="#000" shape-rendering="auto"/><rect x="39" y="389.36" width="6" height="1.5" fill="#000" shape-rendering="auto"/><rect x="42" y="385.89" width="3" height="1.5" fill="#000" shape-rendering="auto"/><rect x="42" y="382.42" width="3" height="1.5" fill="#000" shape-rendering="auto"/><rect x="39" y="378.95" width="6" height="1.5" fill="#000" shape-rendering="auto"/><rect x="42" y="375.49" width="3" height="1.5" fill="#000" shape-rendering="auto"/><rect x="42" y="372.02" width="3" height="1.5" fill="#000" shape-rendering="auto"/><rect x="39" y="368.55" width="6" height="1.5" fill="#000" shape-rendering="auto"/><rect x="42" y="365.09" width="3" height="1.5" fill="#000" shape-rendering="auto"/><rect x="42" y="361.62" width="3" height="1.5" fill="#000" shape-rendering="auto"/><rect x="39" y="358.15" width="6" height="1.5" fill="#000" shape-rendering="auto"/><rect x="42" y="354.69" width="3" height="1.5" fill="#000" shape-rendering="auto"/><rect x="42" y="351.22" width="3" height="1.5" fill="#000" shape-rendering="auto"/><rect x="39" y="347.75" width="6" height="1.5" fill="#000" shape-rendering="auto"/><rect x="42" y="344.28" width="3" height="1.5" fill="#000" shape-rendering="auto"/><rect x="42" y="340.82" width="3" height="1.5" fill="#000" shape-rendering="auto"/><rect x="39" y="337.35" width="6" height="1.5" fill="#000" shape-rendering="auto"/><rect x="42" y="333.88" width="3" height="1.5" fill="#000" shape-rendering="auto"/><rect x="42" y="330.42" width="3" height="1.5" fill="#000" shape-rendering="auto"/><rect x="39" y="326.95" width="6" height="1.5" fill="#000" shape-rendering="auto"/><rect x="42" y="323.48" width="3" height="1.5" fill="#000" shape-rendering="auto"/><rect x="42" y="320.02" width="3" height="1.5" fill="#000" shape-rendering="auto"/><rect x="39" y="316.55" width="6" height="1.5" fill="#000" shape-rendering="auto"/><rect x="42" y="313.08" width="3" height="1.5" fill="#000" shape-rendering="auto"/><rect x="42" y="309.61" width="3" height="1.5" fill="#000" shape-rendering="auto"/><rect x="39" y="306.15" width="6" height="1.5" fill="#000" shape-rendering="auto"/><rect x="42" y="302.68" width="3" height="1.5" fill="#000" shape-rendering="auto"/><rect x="42" y="299.21" width="3" height="1.5" fill="#000" shape-rendering="auto"/><rect x="39" y="295.75" width="6" height="1.5" fill="#000" shape-rendering="auto"/><rect x="42" y="292.28" width="3" height="1.5" fill="#000" shape-rendering="auto"/><rect x="42" y="288.81" width="3" height="1.5" fill="#000" shape-rendering="auto"/><rect x="39" y="285.35" width="6" height="1.5" fill="#000" shape-rendering="auto"/><rect x="42" y="281.88" width="3" height="1.5" fill="#000" shape-rendering="auto"/><rect x="42" y="278.41" width="3" height="1.5" fill="#000" shape-rendering="auto"/><rect x="39" y="274.94" width="6" height="1.5" fill="#000" shape-rendering="auto"/></g><clipPath id="lc"><rect x="3" y="262" width="40" height="150"/></clipPath><g clip-path="url(#lc)"><text x="37" y="279.5" text-anchor="end" font-size="10.5" letter-spacing=".25" fill="#000">+180.00</text><text x="37" y="289.9" text-anchor="end" font-size="10.5" letter-spacing=".25" fill="#000">+150.00</text><text x="37" y="300.3" text-anchor="end" font-size="10.5" letter-spacing=".25" fill="#000">+120.00</text><text x="37" y="310.7" text-anchor="end" font-size="10.5" letter-spacing=".25" fill="#000">+90.00</text><text x="37" y="321.1" text-anchor="end" font-size="10.5" letter-spacing=".25" fill="#000">+60.00</text><text x="37" y="331.5" text-anchor="end" font-size="10.5" letter-spacing=".25" fill="#000">+30.00</text><text x="37" y="341.9" text-anchor="end" font-size="10.5" letter-spacing=".25" fill="#000">+0.00</text><text x="37" y="352.3" text-anchor="end" font-size="10.5" letter-spacing=".25" fill="#000">−30.00</text><text x="37" y="362.7" text-anchor="end" font-size="10.5" letter-spacing=".25" fill="#000">−60.00</text><text x="37" y="373.1" text-anchor="end" font-size="10.5" letter-spacing=".25" fill="#000">−90.00</text><text x="37" y="383.5" text-anchor="end" font-size="10.5" letter-spacing=".25" fill="#000">−120.00</text><text x="37" y="393.9" text-anchor="end" font-size="10.5" letter-spacing=".25" fill="#000">−150.00</text><text x="37" y="404.3" text-anchor="end" font-size="10.5" letter-spacing=".25" fill="#000">−180.00</text></g><g fill="none" stroke-width="1.25" stroke-linejoin="miter" shape-rendering="crispEdges"><polyline points="47.0,337.4 75.0,337.0 100.0,335.5 130.0,333.0 160.0,330.2 187.0,328.2 221.9,328.2 235.0,330.5 250.4,333.2 272.6,337.3 300.0,338.3 307.2,339.5 326.4,344.1 348.0,345.5 369.6,350.3 381.6,350.3 390.0,346.0 398.4,340.0 404.4,337.6 412.8,336.4 429.6,334.5 439.2,334.5 452.4,339.3 462.0,339.3 469.2,336.4 477.6,335.5 487.2,337.9 495.6,338.8 505.2,346.0 511.2,346.5 517.2,341.2 522.0,339.3 538.8,339.3 548.4,341.7 554.4,350.8 558.8,353.7 564.0,350.3 571.2,347.2 579.6,338.8 585.6,321.0 589.2,322.0 594.8,328.0 601.2,329.2 604.8,330.4 609.5,341.6 614.3,348.7 618.5,359.4 621.4,355.9 625.0,347.1 633.3,346.4 639.2,337.6 646.3,335.7 649.9,321.4 658.2,321.9 664.2,320.2 667.3,313.1 669.4,316.7 672.5,325.7 676.5,315.5 682.0,318.6 686.7,319.0 691.5,317.4 702.2,319.0 708.1,325.0 711.7,333.3 716.4,344.0 718.8,330.9 723.6,324.3 729.5,326.6 737.8,325.7 737.8,325.7 742.6,325.7 742.6,327.4 745.0,327.4 745.0,333.3 747.3,333.3 747.3,345.2 750.2,345.2 750.2,338.0 753.3,338.0 753.3,344.0 756.4,344.0 756.4,360.6 758.7,360.6 758.7,338.0 762.8,338.0 762.8,333.3 764.0,333.3 764.0,322.6 767.1,322.6 767.1,313.1 769.2,313.1 769.2,338.0 772.3,338.0 772.3,340.4 774.7,340.4 774.7,319.0 777.0,319.0 777.0,328.5 783.0,328.5 783.0,332.1 785.4,332.1 785.4,338.0 788.4,338.0 788.4,344.7 790.1,344.7 790.1,319.0 792.5,319.0 792.5,311.4 796.1,311.4 796.1,316.7 798.4,316.7 798.4,333.3 802.0,333.3 802.0,346.4 806.7,346.4 806.7,339.2 810.8,339.2 810.8,345.2 812.0,345.2 812.0,329.7 813.9,329.7 813.9,319.0 817.4,319.0 817.4,334.5 820.5,334.5 820.5,326.2 822.2,326.2 822.2,336.9 828.1,336.9 828.1,338.0 834.1,338.0 834.1,334.5 837.2,334.5 837.2,341.6 838.4,341.6 838.4,357.1 843.5,357.1 843.5,341.6 847.0,341.6 847.0,331.0 850.5,331.0 850.5,356.9 851.5,356.9 851.5,322.3 855.5,322.3 855.5,349.0 859.0,349.0 859.0,332.3 862.5,332.3 862.5,363.9 866.0,363.9 866.0,335.4 867.0,335.4 867.0,360.6 870.5,360.6 870.5,332.7 871.5,332.7 871.5,326.2 875.5,326.2 875.5,353.9 879.5,353.9 879.5,333.7 883.0,333.7 883.0,353.1 884.5,353.1 884.5,322.1 888.0,322.1 888.0,352.2 891.0,352.2 891.0,334.1 892.5,334.1 892.5,355.0 893.5,355.0 893.5,339.8 894.5,339.8 894.5,363.5 895.5,363.5 895.5,334.2 896.5,334.2 896.5,356.0 898.0,356.0 898.0,332.6 901.0,332.6 901.0,347.3 902.0,347.3 902.0,333.3 905.0,333.3 905.0,349.2 908.0,349.2 908.0,332.3 912.0,332.3 912.0,348.5 915.0,348.5 915.0,332.7 916.0,332.7 916.0,345.6 919.5,345.6 919.5,322.1 920.5,322.1 920.5,333.5 924.5,333.5 924.5,354.1 925.5,354.1 925.5,359.0 929.0,359.0 929.0,328.9 930.5,328.9 930.5,352.2 934.5,352.2 934.5,335.5 938.0,335.5 938.0,354.2 941.5,354.2 941.5,339.8 945.0,339.8 945.0,359.3 946.5,359.3 946.5,329.2 950.0,329.2 950.0,357.4 953.5,357.4 953.5,352.5 956.5,352.5 956.5,329.2 957.5,329.2 957.5,359.2 961.0,359.2 961.0,339.6 962.5,339.6 962.5,357.3 966.0,357.3 966.0,334.6 967.0,334.6 967.0,344.5 970.0,344.5 970.0,353.0 971.5,353.0 971.5,340.4 972.5,340.4 972.5,347.8 973.5,347.8 973.5,333.5 974.5,333.5 974.5,350.0 975.5,350.0 975.5,335.1 978.5,335.1 978.5,325.5 982.0,325.5 982.0,362.2 985.5,362.2 985.5,334.7 989.5,334.7 989.5,332.3 990.5,332.3 990.5,333.2 994.5,333.2 994.5,361.9 995.5,361.9 995.5,332.2 999.5,332.2 999.5,355.1 1003.5,355.1 1003.5,333.5 1005.0,333.5 1005.0,350.3 1007.5,350.3 1007.5,345.8 1008.5,345.8 1008.5,312.5 1011.5,312.5 1011.5,338.2 1012.5,338.2 1012.5,359.3 1013.5,359.3 1013.5,321.7 1016.0,321.7 1016.0,350.5 1018.5,350.5 1018.5,320.4 1021.0,320.4 1021.0,358.8 1022.0,358.8 1022.0,327.7 1023.0,327.7 1023.0,336.6 1024.0,336.6 1024.0,323.5 1026.5,323.5 1026.5,350.8 1027.5,350.8 1027.5,323.2 1030.5,323.2 1030.5,343.4 1032.0,343.4 1032.0,318.3 1033.5,318.3 1033.5,341.6 1035.0,341.6 1035.0,338.6 1036.0,338.6 1036.0,318.6 1038.5,318.6 1038.5,355.3 1039.5,355.3 1039.5,350.2 1040.5,350.2 1040.5,306.3 1041.5,306.3 1041.5,341.2 1044.0,341.2 1044.0,325.5 1047.0,325.5 1047.0,345.4 1048.5,345.4 1048.5,314.8 1050.0,314.8 1050.0,342.7 1051.0,342.7 1051.0,329.5 1052.5,329.5 1052.5,344.1 1054.0,344.1 1054.0,308.5 1056.5,308.5 1056.5,339.3 1057.5,339.3 1057.5,329.7 1058.5,329.7 1058.5,347.0 1059.5,347.0 1059.5,327.3 1061.0,327.3 1061.0,332.3 1062.0,332.3 1062.0,350.3 1063.0,350.3 1063.0,349.3 1066.0,349.3 1066.0,310.2 1067.5,310.2 1067.5,344.7 1070.5,344.7 1070.5,325.4 1071.5,325.4 1071.5,350.8 1074.0,350.8 1074.0,319.6 1075.0,319.6 1075.0,352.8 1078.0,352.8 1078.0,311.9 1079.5,311.9 1079.5,339.4 1080.5,339.4 1080.5,328.1 1081.5,328.1 1081.5,360.9 1084.0,360.9 1084.0,308.1 1085.5,308.1 1085.5,361.7 1086.5,361.7 1086.5,321.9 1089.5,321.9 1089.5,343.3 1091.0,343.3 1091.0,315.3 1092.0,315.3 1092.0,343.3 1093.0,343.3 1093.0,318.5 1094.0,318.5 1094.0,349.8 1097.0,349.8 1097.0,311.3 1099.5,311.3 1099.5,355.5 1102.0,355.5 1102.0,326.1 1104.5,326.1 1104.5,332.5 1106.0,332.5 1106.0,340.2 1109.0,340.2 1109.0,314.3 1112.0,314.3 1112.0,337.0 1115.0,337.0 1115.0,321.6 1116.0,321.6 1116.0,307.3 1117.0,307.3 1117.0,359.8 1118.0,359.8 1118.0,323.9 1119.0,323.9 1119.0,335.9 1121.5,335.9 1121.5,322.1 1122.5,322.1 1122.5,349.6 1123.5,349.6 1123.5,330.1 1126.0,330.1 1126.0,358.9 1128.5,358.9 1128.5,345.3 1131.0,345.3 1131.0,331.7 1132.0,331.7 1132.0,323.0 1133.0,323.0 1133.0,355.2 1134.0,355.2 1134.0,362.9 1135.5,362.9 1135.5,318.4 1137.0,318.4 1137.0,352.2 1140.0,352.2 1140.0,323.7 1143.0,323.7 1143.0,362.6 1145.5,362.6 1145.5,336.9 1148.0,336.9 1148.0,343.4 1151.0,343.4 1151.0,325.4 1154.0,325.4 1154.0,344.6 1155.0,344.6 1155.0,330.6 1156.5,330.6 1156.5,363.2 1157.5,363.2 1157.5,327.6 1158.5,327.6 1158.5,350.4 1159.5,350.4 1159.5,330.2 1160.5,330.2 1160.5,351.6 1161.5,351.6 1161.5,338.3 1162.5,338.3 1162.5,361.0 1164.0,361.0 1164.0,326.1 1167.0,326.1 1167.0,359.4 1168.0,359.4 1168.0,338.6 1170.5,338.6 1170.5,339.2 1173.5,339.2 1173.5,355.7 1176.0,355.7 1176.0,334.1 1177.0,334.1 1177.0,333.0 1178.0,333.0 1178.0,357.7 1179.0,357.7 1179.0,351.3 1180.5,351.3 1180.5,337.6 1181.5,337.6 1181.5,349.2 1182.5,349.2 1182.5,332.1 1185.0,332.1 1185.0,353.2 1186.5,353.2 1186.5,338.1 1189.5,338.1 1189.5,351.1 1191.0,351.1 1191.0,335.2 1193.5,335.2 1193.5,363.0 1194.5,363.0 1194.5,348.5 1196.0,348.5 1196.0,357.3 1197.0,357.3 1197.0,347.5 1199.5,347.5 1199.5,358.7 1201.0,358.7 1201.0,356.3 1202.0,356.3 1202.0,365.4 1203.0,365.4 1203.0,359.9 1204.0,359.9 1204.0,366.4 1206.0,366.4 1206.0,367.2 1207.0,367.2 1207.0,367.8 1208.5,367.8 1208.5,359.5 1211.5,359.5 1211.5,363.0 1214.5,363.0 1214.5,350.4 1217.0,350.4 1217.0,365.8 1218.0,365.8 1218.0,350.3 1220.5,350.3 1220.5,348.4 1221.5,348.4 1221.5,358.9 1223.0,358.9 1223.0,347.0 1224.5,347.0 1224.5,353.2 1227.5,353.2 1227.5,354.0 1228.5,354.0 1228.5,356.0 1231.5,356.0 1231.5,359.8 1232.5,359.8 1232.5,362.3 1233.5,362.3 1233.5,360.1 1234.5,360.1 1234.5,360.1 1236.5,360.1 1236.5,363.7 1237.5,363.7 1237.5,361.8 1239.0,361.8 1239.0,360.5 1241.0,360.5 1241.0,360.4 1242.5,360.4 1242.5,359.9 1244.0,359.9 1244.0,359.2 1245.5,359.2 1245.5,359.5 1247.0,359.5 1247.0,359.5 1249.0,359.5 1249.0,359.7 1250.0,359.7 1250.0,356.4 1252.0,356.4 1252.0,359.4 1253.0,359.4 1253.0,353.6 1255.0,353.6 1255.0,355.8 1256.5,355.8 1256.5,355.0 1257.5,355.0 1257.5,357.0 1259.5,357.0 1259.5,355.4 1260.5,355.4 1260.5,357.3 1261.5,357.3 1261.5,354.9 1263.0,354.9 1263.0,350.0 1264.0,350.0 1264.0,345.3 1265.0,345.3 1265.0,341.5 1267.0,341.5 1267.0,345.4 1268.0,345.4 1268.0,342.1 1269.0,342.1 1269.0,341.8 1270.0,341.8 1270.0,338.3 1271.5,338.3 1271.5,333.7 1272.5,333.7 1272.5,335.3 1274.0,335.3 1274.0,337.3 1275.0,337.3 1275.0,333.8 1276.0,333.8 1276.0,331.8 1277.5,331.8 1277.5,333.2 1279.5,333.2 1279.5,333.7 1281.0,333.7 1281.0,334.9 1283.0,334.9 1283.0,334.4 1284.0,334.4 1284.0,336.9 1286.0,336.9 1286.0,340.5 1287.5,340.5 1287.5,335.3 1289.0,335.3 1289.0,335.0 1291.0,335.0 1291.0,339.5 1292.5,339.5 1292.5,339.6 1294.5,339.6 1294.5,335.4 1296.5,335.4 1296.5,338.3 1298.5,338.3 1298.5,337.1 1299.5,337.1 1299.5,334.7 1300.5,334.7 1300.5,333.9 1302.5,333.9 1302.5,336.2 1304.5,336.2 1304.5,339.7 1305.5,339.7 1305.5,334.3 1307.0,334.3 1307.0,334.4 1309.0,334.4 1309.0,337.8 1310.0,337.8 1310.0,335.8 1311.0,335.8 1311.0,339.6 1313.0,339.6 1313.0,341.5 1314.0,341.5 1314.0,336.9 1315.5,336.9 1315.5,339.3 1317.0,339.3 1317.0,337.2 1318.5,337.2 1318.5,334.2 1319.5,334.2 1319.5,334.9 1320.5,334.9 1320.5,336.3 1322.0,336.3 1322.0,335.2" stroke="#00f000"/></g><rect x="307" y="265" width="1" height="146" fill="#fff" shape-rendering="crispEdges"/><text x="1320.3" y="275.6" text-anchor="end" font-size="11.6" font-style="italic" font-weight="bold" letter-spacing=".42" fill="#e8e8e8">SpectraFoo</text></svg>
<div class="a" style="left:1.5px;top:449px;width:14.3px;height:14.5px;background:#00e400;box-sizing:border-box;border-bottom:1px solid #0a3a0a;border-right:1px solid #0a3a0a"></div>
<svg style="left:2px;top:449.5px" width="13" height="13" viewBox="0 0 13 13"><circle cx="6.5" cy="6.8" r="5" fill="none" stroke="#003000" stroke-width="1.1"/><path d="M6.5 3.4 V10.2" stroke="#003000" stroke-width="1.2"/></svg>
<div class="a" style="left:17.5px;top:449.5px;width:32.5px;height:14.5px;box-sizing:border-box;border:1.3px solid #111;background:#d6d6d6;box-shadow:inset 0 0 0 1px #f1f1f1"></div>
<div class="t b" style="left:23.8px;top:451.5px;font-size:10.5px;letter-spacing:-.2px">Solo</div>
<div class="a" style="left:51.5px;top:448.8px;width:14.5px;height:14.8px;box-sizing:border-box;border:1.2px solid #222;border-radius:3.5px;background:#e6e6e6"></div>
<svg style="left:52px;top:449px" width="14" height="14" viewBox="0 0 14 14"><circle cx="4.2" cy="4.6" r="1.6" fill="none" stroke="#222" stroke-width="1"/><circle cx="4.2" cy="9.6" r="1.6" fill="none" stroke="#222" stroke-width="1"/><rect x="7.4" y="4" width="1.2" height="1.2" fill="#222"/><rect x="10" y="4" width="1.2" height="1.2" fill="#222"/><rect x="7.4" y="9" width="1.2" height="1.2" fill="#222"/><rect x="10" y="9" width="1.2" height="1.2" fill="#222"/></svg>
<div class="btn" style="left:70.5px;top:447.3px;width:95.2px;height:17px;line-height:1;padding-top:3.2px;letter-spacing:0px">Take Snapshot...</div>
<div class="btn" style="left:169px;top:447.3px;width:81.6px;height:17px;line-height:1;padding-top:3.2px;letter-spacing:0px">Overlay List...</div>
<div class="btn" style="left:254.2px;top:447.3px;width:66.2px;height:17px;line-height:1;padding-top:3.2px;letter-spacing:0.15px">Clear Data</div>
<div class="a" style="left:1318px;top:453px;width:13px;height:13.5px;background:#fbfbfb"></div>
<svg style="left:1318px;top:453px" width="13" height="13" viewBox="0 0 13 13"><path d="M2 13 L13 2 M6 13 L13 6 M10 13 L13 10" stroke="#9c9c9c" stroke-width="1" fill="none"/></svg>
<div class="a" style="left:1px;top:467px;width:1330px;height:164px;background:#e8e8e8"></div>
<div class="a" style="left:1px;top:467.3px;width:1330px;height:22.8px;box-sizing:border-box;border-top:1.2px solid #111;border-radius:4px 4px 0 0;background:linear-gradient(#ededed,#d9d9d9 50%,#bfbfbf);border-bottom:1px solid #8c8c8c"></div>
<div class="a" style="left:9px;top:473px;width:12px;height:12px;border-radius:50%;box-sizing:border-box;border:1px solid #a3322c;background:radial-gradient(ellipse 55% 32% at 50% 20%,rgba(255,255,255,.8),rgba(255,255,255,0) 100%),radial-gradient(circle at 50% 88%,#ffb3a8 0%,#f5665d 50%,#a3322c 115%)"></div>
<div class="a" style="left:29px;top:473px;width:12px;height:12px;border-radius:50%;box-sizing:border-box;border:1px solid #a8782a;background:radial-gradient(ellipse 55% 32% at 50% 20%,rgba(255,255,255,.8),rgba(255,255,255,0) 100%),radial-gradient(circle at 50% 88%,#ffe39c 0%,#f3b13f 50%,#a8782a 115%)"></div>
<div class="a" style="left:49px;top:473px;width:12px;height:12px;border-radius:50%;box-sizing:border-box;border:1px solid #4f8a3a;background:radial-gradient(ellipse 55% 32% at 50% 20%,rgba(255,255,255,.8),rgba(255,255,255,0) 100%),radial-gradient(circle at 50% 88%,#d2f0b8 0%,#7cc05c 50%,#4f8a3a 115%)"></div>
<div class="t" style="left:341px;top:472.9px;font-size:13px;letter-spacing:.33px;color:#3c3c3c">Delay Finder: S: [700] FW 5 R: [700] FW 1 (Monday, <span style="letter-spacing:.57px">June 23, 2014 at 6:21:13 PM Central Daylight Time)</span></div>
<div class="t b" style="left:27.2px;top:503.7px;font-size:10.5px">Cursor:</div>
<div class="a" style="left:69px;top:497px;width:87px;height:22px;box-sizing:border-box;border:1.2px solid #111;background:#fff"></div>
<div class="t" style="left:72.8px;top:504px;font-size:10.75px;color:#4a4a4a">00:00:00.06147<span style="color:#222;border-bottom:1.6px solid #111;padding-bottom:.5px">3</span></div>
<div class="t b" style="left:166.5px;top:496.3px;font-size:10.65px">Maximum Channel Delay:</div>
<div class="t b" style="left:302.6px;top:496.3px;font-size:10.65px;letter-spacing:.57px">768000 samples (17414.967 ms) [19678.91 ft] [5927.29 m]</div>
<div class="t b" style="left:166.5px;top:512.5px;font-size:10.65px">Source Channel Delay:</div>
<div class="t b" style="left:287px;top:512.5px;font-size:10.65px;letter-spacing:.57px">2711 samples (61.474 ms) [69.47 ft] [20.92 m]</div>
<div class="btn" style="left:1197.2px;top:493.6px;width:130.6px;height:17px;line-height:1;padding-top:3.3px;letter-spacing:0.13px">Make Capture</div>
<div class="btn" style="left:1197.2px;top:514.3px;width:130.6px;height:17.3px;line-height:1;padding-top:3.3px;letter-spacing:-0.08px">Rename Window...</div>
<svg style="left:0;top:0" width="1333" height="631" viewBox="0 0 1333 631" font-family="Liberation Sans, sans-serif"><rect x="24.6" y="534.9" width="1284.5" height="74.2" fill="#f6f6f6"/><rect x="25.3" y="535.6" width="1282.7" height="72.4" fill="#000"/><g shape-rendering="crispEdges"><rect x="27" y="537" width="1280" height="70" fill="#000"/><rect x="28" y="544" width="1278" height="1" fill="#626262"/><rect x="28" y="550" width="1278" height="1" fill="#626262"/><rect x="28" y="557" width="1278" height="1" fill="#626262"/><rect x="28" y="564" width="1278" height="1" fill="#626262"/><rect x="28" y="577" width="1278" height="1" fill="#626262"/><rect x="28" y="584" width="1278" height="1" fill="#626262"/><rect x="28" y="590" width="1278" height="1" fill="#626262"/><rect x="28" y="597" width="1278" height="1" fill="#626262"/><rect x="28" y="571" width="1278" height="1" fill="#626262"/><rect x="27" y="537" width="1280" height="1" fill="#fff"/><rect x="27" y="537" width="1" height="70" fill="#fff"/><rect x="28" y="606" width="1279" height="1" fill="#808080"/><rect x="1306" y="538" width="1" height="69" fill="#808080"/></g><g fill="none" stroke-width="1.3" stroke-linejoin="miter" shape-rendering="crispEdges"><polyline points="28.0,571.4 34.0,573.4 37.0,571.7 39.0,571.7 44.0,571.1 46.0,570.8 49.0,571.5 52.0,570.2 58.0,570.3 60.0,570.1 63.0,570.4 66.0,571.8 72.0,571.2 75.0,571.3 80.0,570.8 83.0,570.6 87.0,571.2 89.0,571.4 91.0,571.6 96.0,570.4 101.0,570.2 103.0,570.7 108.0,572.9 114.0,570.9 117.0,571.8 119.0,571.8 124.0,570.7 130.0,570.9 136.0,571.5 140.0,569.3 146.0,571.8 150.0,571.4 152.0,570.7 155.0,571.2 159.0,570.4 161.0,572.5 167.0,570.6 172.0,568.6 176.0,570.3 182.0,571.2 187.0,572.9 189.0,570.6 194.0,571.2 197.0,570.9 202.0,570.7 206.0,570.8 209.0,568.8 214.0,570.4 219.0,571.5 225.0,571.5 229.0,571.3 233.0,571.4 237.0,570.6 241.0,570.7 244.0,570.1 250.0,570.7 254.0,571.6 258.0,571.3 263.0,571.6 268.0,571.8 274.0,569.3 278.0,571.0 280.0,571.4 283.0,571.8 289.0,570.9 295.0,571.7 299.0,570.1 302.0,571.2 305.0,571.3 307.0,571.9 310.0,569.4 313.0,571.1 318.0,570.8 324.0,569.2 328.0,573.5 333.0,571.3 339.0,570.2 345.0,570.6 351.0,571.1 355.0,570.9 361.0,570.8 364.0,573.1 367.0,571.2 371.0,571.3 376.0,569.1 382.0,570.9 385.0,571.0 390.0,571.6 393.0,570.6 397.0,570.8 401.0,570.7 405.0,569.4 411.0,570.5 413.0,571.6 415.0,571.1 418.0,571.5 421.0,571.6 425.0,571.2 430.0,571.7 432.0,569.2 438.0,571.2 444.0,572.9 450.0,569.2 455.0,570.3 461.0,573.4 466.0,571.3 471.0,571.6 476.0,571.6 479.0,570.9 481.0,570.1 486.0,571.3 491.0,570.4 496.0,571.7 500.0,570.9 506.0,570.2 509.0,570.3 511.0,570.1 516.0,571.9 521.0,569.3 523.0,570.3 527.0,570.9 530.0,570.8 533.0,569.5 535.0,571.4 539.0,568.7 545.0,572.6 551.0,570.7 555.0,570.3 559.0,573.5 565.0,570.5 567.0,570.6 571.0,570.3 574.0,570.9 579.0,568.8 581.0,570.2 583.0,570.9 588.0,571.0 592.0,568.9 597.0,568.5 602.0,570.5 604.0,573.4 607.0,570.8 610.0,571.8 614.0,570.8 618.0,571.5 623.0,570.8 625.0,571.1 628.0,570.3 630.0,569.5 635.0,570.7 640.0,571.7 646.0,570.7 651.0,568.8 653.0,570.8 658.0,572.6 663.1,571.0 663.1,546.9 665.3,548.0 666.5,605.4 668.7,581.8 669.6,553.6 672.1,552.0 673.0,559.3 674.8,560.4 676.6,571.6 678.2,578.4 680.4,575.0 682.7,577.3 685.6,581.3 687.2,573.9 689.4,567.1 691.7,571.6 694.6,576.1 698.4,575.0 700.7,571.6 702.3,575.0 705.2,567.1 708.6,571.6 711.3,573.9 714.2,571.0 718.7,568.7 722.0,571.0 724.0,571.3 726.0,570.2 730.0,570.2 732.0,570.9 735.0,573.1 738.0,570.4 741.0,571.1 743.0,571.7 747.0,570.4 751.0,571.4 756.0,569.0 759.0,571.3 766.0,564.9 770.4,572.8 772.7,566.5 775.0,570.5 777.2,566.0 781.7,570.0 788.5,573.9 794.0,570.5 801.9,571.0 807.6,573.9 814.3,571.0 832.4,573.9 836.9,571.0 848.1,569.4 850.4,565.6 853.8,577.3 857.1,568.3 859.0,567.1 862.4,568.3 864.6,576.1 866.9,569.4 871.4,573.9 877.0,571.2 886.0,572.8 889.4,568.7 895.0,570.5 902.9,565.6 906.7,576.1 910.3,567.1 916.4,571.6 921.6,567.1 924.7,575.0 928.8,569.4 935.5,571.0 937.8,568.3 944.5,574.6 947.9,568.7 950.2,571.6 954.0,567.1 961.4,573.9 965.9,569.4 970.4,572.8 973.3,568.7 977.2,570.5 980.5,568.7 983.9,572.8 988.4,572.8 991.8,570.1 994.0,572.8 997.4,569.4 1003.0,572.8 1005.7,569.4 1006.9,553.6 1008.2,553.6 1009.1,570.5 1009.8,588.5 1010.9,575.0 1012.0,560.4 1015.4,557.5 1017.0,570.5 1020.6,575.0 1025.1,567.1 1027.8,570.5 1029.4,577.3 1032.8,565.6 1036.8,570.5 1040.9,576.1 1044.7,571.0 1050.3,570.5 1054.8,575.0 1060.4,569.4 1063.8,572.3 1069.4,567.1 1072.8,570.5 1079.6,569.4 1081.8,572.3 1086.3,566.0 1092.0,566.0 1095.3,572.3 1104.3,571.6 1113.3,570.5 1121.2,567.1 1125.7,572.8 1131.3,569.4 1140.3,571.0 1143.0,570.6 1148.0,572.6 1150.0,571.9 1156.0,571.8 1158.0,571.5 1160.0,570.2 1163.0,571.0 1165.0,572.8 1167.0,571.8 1170.0,572.6 1173.0,573.2 1175.0,571.8 1181.0,569.0 1186.0,571.0 1192.0,571.0 1195.0,571.7 1199.0,571.7 1203.0,571.5 1209.3,568.5 1214.5,568.5 1216.0,572.0 1236.0,571.5 1239.0,568.5 1242.5,566.7 1244.0,571.0 1246.0,578.0 1248.0,571.0 1250.3,566.7 1252.5,571.0 1262.0,572.0 1266.0,569.0 1268.7,566.7 1271.5,571.0 1275.0,573.5 1279.0,571.0 1285.0,570.0 1290.0,571.5 1298.0,570.0 1306.0,571.5" stroke="#00f000"/></g><rect x="666" y="538" width="1.2" height="68" fill="#fff" shape-rendering="crispEdges"/></svg>
<div class="a" style="left:31px;top:618.5px;width:1300px;height:13px;background:linear-gradient(#e4e4e4,#f4f4f4 30%,#fbfbfb)"></div>
<div class="a" style="left:1px;top:618.5px;width:14.5px;height:13px;box-sizing:border-box;background:#e2e2e2;border:1.2px solid #111;border-bottom:0"></div>
<div class="a" style="left:14.5px;top:618.5px;width:16.6px;height:13px;box-sizing:border-box;background:#e2e2e2;border:1.2px solid #111;border-bottom:0"></div>
<svg style="left:0.5px;top:619px" width="15" height="13" viewBox="0 0 15 13"><circle cx="6" cy="5.6" r="3.7" fill="#d6d3f5" stroke="#111" stroke-width="1"/><path d="M8.8 8.4 L12.6 12.6" stroke="#111" stroke-width="1.4"/><path d="M3.9 5.6 H8.1" stroke="#111" stroke-width="1.1"/></svg>
<svg style="left:15.8px;top:619px" width="15" height="13" viewBox="0 0 15 13"><circle cx="6" cy="5.6" r="3.7" fill="#d6d3f5" stroke="#111" stroke-width="1"/><path d="M8.8 8.4 L12.6 12.6" stroke="#111" stroke-width="1.4"/><path d="M3.9 5.6 H8.1" stroke="#111" stroke-width="1.1"/><path d="M6 3.5 V7.7" stroke="#111" stroke-width="1.1"/></svg>
<div class="a" style="left:32px;top:623.2px;width:17px;height:7px;border-radius:3.5px;background:#c1c1c1"></div>
<div class="a" style="left:754.6px;top:622.5px;width:21.5px;height:8px;border-radius:4px;background:#c1c1c1"></div>
<div class="a" style="left:1318px;top:619px;width:13px;height:12px;background:#fbfbfb"></div>
<svg style="left:1318px;top:619px" width="13" height="12" viewBox="0 0 13 12"><path d="M2 12 L13 1 M6 12 L13 5 M10 12 L13 9" stroke="#9c9c9c" stroke-width="1" fill="none"/></svg>
</body></html>
